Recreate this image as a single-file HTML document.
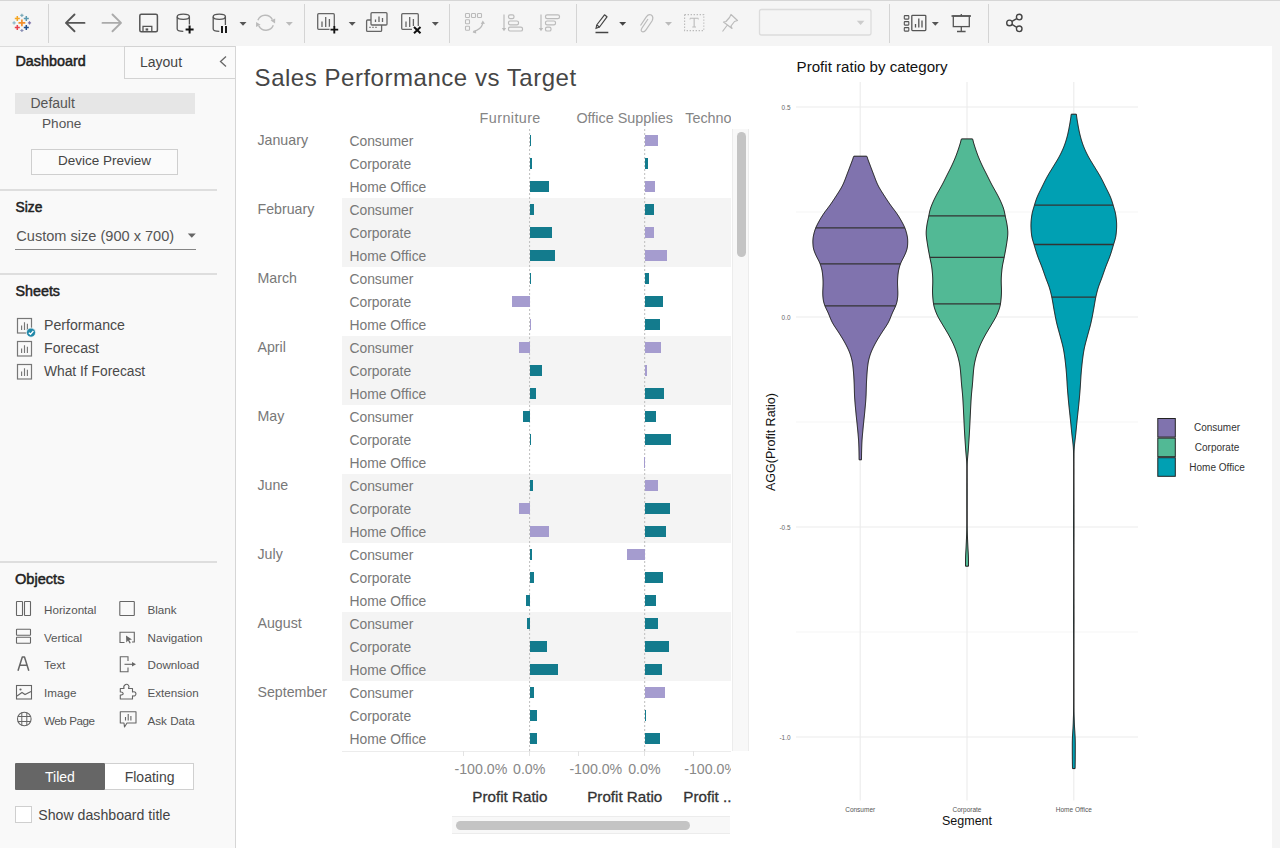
<!DOCTYPE html><html><head><meta charset="utf-8"><style>
html,body{margin:0;padding:0;}
body{width:1280px;height:848px;overflow:hidden;position:relative;background:#f5f5f5;font-family:"Liberation Sans", sans-serif;}
.t{position:absolute;white-space:nowrap;line-height:1;}
svg{position:absolute;overflow:visible;}
</style></head><body>

<div style="position:absolute;left:0px;top:0px;width:1280px;height:1px;background:#d6d6d6"></div>
<div style="position:absolute;left:48px;top:4px;width:1px;height:39px;background:#d4d4d4"></div>
<div style="position:absolute;left:304px;top:4px;width:1px;height:39px;background:#d4d4d4"></div>
<div style="position:absolute;left:449px;top:4px;width:1px;height:39px;background:#d4d4d4"></div>
<div style="position:absolute;left:576px;top:4px;width:1px;height:39px;background:#d4d4d4"></div>
<div style="position:absolute;left:889px;top:4px;width:1px;height:39px;background:#d4d4d4"></div>
<div style="position:absolute;left:988px;top:4px;width:1px;height:39px;background:#d4d4d4"></div>
<svg style="left:0;top:0" width="1280" height="48">
<path d="M18.5 22.9 H25.299999999999997 M21.9 19.5 V26.299999999999997" stroke="#f28e2c" stroke-width="1.7" fill="none"/>
<path d="M14.8 18.5 H19.8 M17.3 16.0 V21.0" stroke="#f5a623" stroke-width="1.5" fill="none"/>
<path d="M23.8 18.5 H28.8 M26.3 16.0 V21.0" stroke="#5b9ab0" stroke-width="1.5" fill="none"/>
<path d="M14.8 27.5 H19.8 M17.3 25.0 V30.0" stroke="#e8414f" stroke-width="1.5" fill="none"/>
<path d="M23.8 27.5 H28.8 M26.3 25.0 V30.0" stroke="#1f4e8c" stroke-width="1.5" fill="none"/>
<path d="M20.299999999999997 15.3 H23.5 M21.9 13.700000000000001 V16.900000000000002" stroke="#7aa9b8" stroke-width="1.2" fill="none"/>
<path d="M12.5 22.9 H15.7 M14.1 21.299999999999997 V24.5" stroke="#8ab5c8" stroke-width="1.2" fill="none"/>
<path d="M27.9 22.9 H31.1 M29.5 21.299999999999997 V24.5" stroke="#7c6fa8" stroke-width="1.2" fill="none"/>
<path d="M20.299999999999997 30.5 H23.5 M21.9 28.9 V32.1" stroke="#8a8fb5" stroke-width="1.2" fill="none"/>
<path d="M84.5 22.9 H66 M74.5 14.5 L66 22.9 L74.5 31.3" stroke="#555" stroke-width="1.9" fill="none" stroke-linecap="round" stroke-linejoin="round"/>
<path d="M102.5 22.9 H120.5 M112.5 14.5 L121 22.9 L112.5 31.3" stroke="#aaa" stroke-width="1.9" fill="none" stroke-linecap="round" stroke-linejoin="round"/>
<rect x="139.8" y="14.3" width="17.6" height="17.4" rx="1.5" stroke="#555" stroke-width="1.5" fill="none"/>
<path d="M143 31.5 V26.3 H151.8 V31.5" stroke="#555" stroke-width="1.3" fill="none"/><rect x="145.6" y="28.4" width="2.6" height="2.2" fill="#555"/>
<ellipse cx="183.3" cy="16.8" rx="6.1" ry="2.6" stroke="#555" stroke-width="1.3" fill="none"/><path d="M177.2 16.8 V29 Q177.2 31.3 183.3 31.3 M189.4 16.8 V25" stroke="#555" stroke-width="1.3" fill="none"/>
<rect x="184.5" y="24.5" width="10" height="10" fill="#f5f5f5"/><path d="M185.6 29.6 H193.6 M189.6 25.6 V33.6" stroke="#111" stroke-width="2" fill="none"/>
<ellipse cx="219.3" cy="16.8" rx="6.1" ry="2.6" stroke="#555" stroke-width="1.3" fill="none"/><path d="M213.2 16.8 V29 Q213.2 31.3 219.3 31.3 M225.4 16.8 V25" stroke="#555" stroke-width="1.3" fill="none"/>
<path d="M222 26 V33 M226 26 V33" stroke="#111" stroke-width="1.9" fill="none"/>
<path d="M239.5 22 L246.5 22 L243.0 25.8 Z" fill="#555"/>
<path d="M257.9 20.3 A8 8 0 0 1 272.4 19.6 M273.3 25.2 A8 8 0 0 1 258.8 25.8" stroke="#bbb" stroke-width="1.5" fill="none"/><path d="M270.6 20.4 L275.2 18.4 L275.1 23.4 Z M260.6 24.8 L256 26.9 L256.1 21.9 Z" fill="#bbb"/>
<path d="M285.8 22 L292.8 22 L289.3 25.8 Z" fill="#bbb"/>
<rect x="317.7" y="13.7" width="16.6" height="15.6" rx="1" stroke="#666" stroke-width="1.3" fill="none"/><path d="M322 27 V21.5 M325.7 27 V17 M329.4 27 V19" stroke="#666" stroke-width="1.3" fill="none"/>
<rect x="329.5" y="26.5" width="9" height="8" fill="#f5f5f5"/>
<path d="M330.5 29.6 H338.2 M334.3 26 V33.6" stroke="#111" stroke-width="1.9" fill="none"/>
<path d="M348.7 22 L355.7 22 L352.2 25.8 Z" fill="#555"/>
<rect x="366.6" y="20" width="15" height="11.4" rx="1" stroke="#666" stroke-width="1.3" fill="none"/>
<rect x="371" y="12.7" width="16" height="12.3" rx="1" stroke="#666" stroke-width="1.3" fill="#f5f5f5"/>
<path d="M375.5 22 V19.5 M379 22 V16.5 M382.5 22 V18" stroke="#666" stroke-width="1.3"/>
<path d="M370 28 V26.8 M373 28 V26.8 M376 28 V26.8" stroke="#666" stroke-width="1.3"/>
<rect x="401.7" y="13.7" width="16.6" height="15.6" rx="1" stroke="#666" stroke-width="1.3" fill="none"/><path d="M406 27 V21.5 M409.7 27 V17 M413.4 27 V19" stroke="#666" stroke-width="1.3" fill="none"/>
<rect x="412" y="26" width="10" height="9" fill="#f5f5f5"/>
<path d="M414 27 L420.5 33.3 M420.5 27 L414 33.3" stroke="#111" stroke-width="2" fill="none"/>
<path d="M431.8 22 L438.8 22 L435.3 25.8 Z" fill="#555"/>
<rect x="465.5" y="13.5" width="4" height="4" rx="0.8" stroke="#bbb" stroke-width="1.1" fill="none"/>
<rect x="471.5" y="13.5" width="4" height="4" rx="0.8" stroke="#bbb" stroke-width="1.1" fill="none"/>
<rect x="477.5" y="13.5" width="4" height="4" rx="0.8" stroke="#bbb" stroke-width="1.1" fill="none"/>
<rect x="465.5" y="19.8" width="4" height="4" rx="0.8" stroke="#bbb" stroke-width="1.1" fill="none"/>
<rect x="465.5" y="26.3" width="4" height="4" rx="0.8" stroke="#bbb" stroke-width="1.1" fill="none"/>
<path d="M473 31.5 Q481 30 483 23" stroke="#bbb" stroke-width="1.2" fill="none"/><path d="M485 23.8 L482.8 20.5 L480.8 24 Z M472.5 32.5 L476 30 L476.2 33.6 Z" fill="#bbb"/>
<path d="M504 14.5 V29.5" stroke="#bbb" stroke-width="1.2"/><path d="M501.8 28 L506.2 28 L504 31.2 Z" fill="#bbb"/>
<rect x="508.5" y="14.8" width="5.5" height="3.8" rx="1.6" stroke="#bbb" stroke-width="1.2" fill="none"/>
<rect x="508.5" y="21" width="10" height="3.8" rx="1.6" stroke="#bbb" stroke-width="1.2" fill="none"/>
<rect x="508.5" y="27.2" width="14" height="3.8" rx="1.6" stroke="#bbb" stroke-width="1.2" fill="none"/>
<path d="M541 14.5 V29.5" stroke="#bbb" stroke-width="1.2"/><path d="M538.8 28 L543.2 28 L541 31.2 Z" fill="#bbb"/>
<rect x="545.5" y="14.8" width="14" height="3.8" rx="1.6" stroke="#bbb" stroke-width="1.2" fill="none"/>
<rect x="545.5" y="21" width="10" height="3.8" rx="1.6" stroke="#bbb" stroke-width="1.2" fill="none"/>
<rect x="545.5" y="27.2" width="5.5" height="3.8" rx="1.6" stroke="#bbb" stroke-width="1.2" fill="none"/>
<path d="M604.5 14.8 L607 16.8 L599.5 27 L596.7 25 Z" stroke="#444" stroke-width="1.2" fill="none" stroke-linejoin="round"/>
<path d="M596.7 25 L596 28.3 L599.5 27" stroke="#444" stroke-width="1.1" fill="none"/>
<path d="M595.5 32.5 H608.3" stroke="#444" stroke-width="1.5"/>
<path d="M619.2 22 L626.2 22 L622.7 25.8 Z" fill="#444"/>
<path d="M648 19 L642 28 Q640 31.5 642.8 31.8 Q644.5 32 646 29.8 L652 21 Q654 17 651.3 15 Q648.5 13.8 646.3 16.8 L640.5 25.5" stroke="#bbb" stroke-width="1.2" fill="none"/>
<path d="M665 22 L672 22 L668.5 25.8 Z" fill="#bbb"/>
<rect x="684.6" y="14.6" width="19.2" height="16" stroke="#bbb" stroke-width="1.1" stroke-dasharray="1.4 1.6" fill="none"/>
<path d="M690 18.3 H698.3 M694.15 18.3 V27 M692.3 27 H696" stroke="#bbb" stroke-width="1.1" fill="none"/><path d="M690 18.3 V19.6 M698.3 18.3 V19.6" stroke="#bbb" stroke-width="0.8"/>
<path d="M731 14.5 L737.5 20.5 L734.5 21.5 L731 26 L732 28.5 L723.5 22 L726 21.5 L729.5 17.5 Z M727 25.5 L722.5 31.5" stroke="#bbb" stroke-width="1.2" fill="none" stroke-linejoin="round"/>
<rect x="759.5" y="9.5" width="111.5" height="25.5" rx="2" stroke="#dcdcdc" stroke-width="1.3" fill="#f5f5f5"/>
<path d="M856.8 20.8 L864.4 20.8 L860.6 25 Z" fill="#ccc"/>
<rect x="904.3" y="15.6" width="4.5" height="3.5" rx="0.6" stroke="#555" stroke-width="1.1" fill="none"/>
<rect x="904.3" y="21.6" width="4.5" height="3.5" rx="0.6" stroke="#555" stroke-width="1.1" fill="none"/>
<rect x="904.3" y="27.6" width="4.5" height="3.5" rx="0.6" stroke="#555" stroke-width="1.1" fill="none"/>
<rect x="911.8" y="15.3" width="14" height="15.3" rx="0.8" stroke="#555" stroke-width="1.3" fill="none"/>
<path d="M915.5 27.5 V24 M918.8 27.5 V18.5 M922 27.5 V20.5" stroke="#555" stroke-width="1.3"/>
<path d="M931.8 22 L938.8 22 L935.3 25.8 Z" fill="#555"/>
<path d="M951.5 16 H971" stroke="#555" stroke-width="1.6"/><rect x="953.3" y="16" width="16" height="10.6" stroke="#555" stroke-width="1.3" fill="none"/>
<path d="M961.3 14 V16 M961.3 26.6 V31.5 M957 31.5 H965.6" stroke="#555" stroke-width="1.3"/>
<circle cx="1019.2" cy="17.1" r="2.8" stroke="#444" stroke-width="1.4" fill="none"/><circle cx="1009.5" cy="22.9" r="2.8" stroke="#444" stroke-width="1.4" fill="none"/><circle cx="1019.2" cy="28.8" r="2.8" stroke="#444" stroke-width="1.4" fill="none"/>
<path d="M1012 21.4 L1016.7 18.6 M1012 24.4 L1016.7 27.3" stroke="#444" stroke-width="1.4"/>
</svg>
<div style="position:absolute;left:0px;top:46px;width:236px;height:802px;background:#f9f9f9"></div>
<div style="position:absolute;left:235px;top:46px;width:1px;height:802px;background:#d9d9d9"></div>
<div style="position:absolute;left:0px;top:46px;width:236px;height:1px;background:#dcdcdc"></div>
<div style="position:absolute;left:124px;top:46px;width:112px;height:33px;box-sizing:border-box;border:1px solid #d3d3d3;border-right:none;background:#fafafa"></div>
<div style="position:absolute;left:235px;top:46px;width:1px;height:802px;background:#d6d6d6"></div>
<div class="t" style="left:15.50px;top:54.35px;font-size:14.35px;color:#222;font-weight:normal;-webkit-text-stroke:0.5px #222;">Dashboard</div>
<div class="t" style="left:140.00px;top:54.95px;font-size:14px;color:#444;font-weight:normal;">Layout</div>
<svg style="left:0;top:0" width="1280" height="848"><path d="M226 56.5 L220.5 61.5 L226 66.5" fill="none" stroke="#666" stroke-width="1.3"/></svg>
<div style="position:absolute;left:15px;top:93px;width:180px;height:21px;background:#e6e6e6"></div>
<div class="t" style="left:30.50px;top:96.45px;font-size:14px;color:#555;font-weight:normal;">Default</div>
<div class="t" style="left:42.00px;top:117.49px;font-size:13.6px;color:#555;font-weight:normal;">Phone</div>
<div style="position:absolute;left:31px;top:149px;width:147px;height:26px;box-sizing:border-box;border:1px solid #cfcfcf;background:#fbfbfb"></div>
<div class="t" style="left:58.00px;top:154.07px;font-size:13.5px;color:#444;font-weight:normal;">Device Preview</div>
<div style="position:absolute;left:0px;top:189px;width:217px;height:1.5px;background:#dedede"></div>
<div class="t" style="left:15.50px;top:200.72px;font-size:13.8px;color:#222;font-weight:normal;-webkit-text-stroke:0.5px #222;">Size</div>
<div class="t" style="left:16.30px;top:229.17px;font-size:14.57px;color:#555;font-weight:normal;">Custom size (900 x 700)</div>
<svg style="left:0;top:0" width="1280" height="848"><path d="M187.8 233.6 L195.8 233.6 L191.8 237.8 Z" fill="#666"/></svg>
<div style="position:absolute;left:15px;top:248.5px;width:181px;height:1.5px;background:#858585"></div>
<div style="position:absolute;left:0px;top:273px;width:217px;height:1.5px;background:#dedede"></div>
<div class="t" style="left:15.50px;top:284.20px;font-size:14.3px;color:#222;font-weight:normal;-webkit-text-stroke:0.5px #222;">Sheets</div>
<svg style="left:0;top:0" width="236" height="848">
<rect x="17.5" y="318.5" width="14" height="14.5" stroke="#777" stroke-width="1.2" fill="none"/>
<path d="M21.6 330 V325.5 M24.5 330 V322.2 M27.4 330 V323.8" stroke="#777" stroke-width="1.15"/>
<rect x="17.5" y="341.5" width="14" height="14.5" stroke="#777" stroke-width="1.2" fill="none"/>
<path d="M21.6 353 V348.5 M24.5 353 V345.2 M27.4 353 V346.8" stroke="#777" stroke-width="1.15"/>
<rect x="17.5" y="364.5" width="14" height="14.5" stroke="#777" stroke-width="1.2" fill="none"/>
<path d="M21.6 376 V371.5 M24.5 376 V368.2 M27.4 376 V369.8" stroke="#777" stroke-width="1.15"/>
<circle cx="31" cy="332.6" r="4.6" fill="#1f87a8" stroke="#f9f9f9" stroke-width="0.8"/><path d="M28.8 332.7 L30.5 334.3 L33.4 331" stroke="#fff" stroke-width="1.3" fill="none"/>
<rect x="16.5" y="601.5" width="6" height="14" rx="0.5" stroke="#666" stroke-width="1.1" fill="none"/><rect x="24.5" y="601.5" width="6" height="14" rx="0.5" stroke="#666" stroke-width="1.1" fill="none"/>
<rect x="16.5" y="629.3" width="14" height="6" rx="0.5" stroke="#666" stroke-width="1.1" fill="none"/><rect x="16.5" y="637.3" width="14" height="6" rx="0.5" stroke="#666" stroke-width="1.1" fill="none"/>
<path d="M18 670.8 L22.3 657 H24.5 L28.8 670.8 M19.8 665.2 H27" stroke="#666" stroke-width="1.5" fill="none" stroke-linejoin="round"/>
<rect x="16.5" y="685.5" width="15" height="13.5" stroke="#666" stroke-width="1.1" fill="none"/><path d="M17 696 L22 692.5 L25 694.5 L31 691.5" stroke="#666" stroke-width="1.1" fill="none"/><circle cx="20.5" cy="689.5" r="1.1" fill="#666"/>
<circle cx="24.3" cy="719" r="6.8" stroke="#666" stroke-width="1.1" fill="none"/><path d="M21.8 712.5 V725.5 M26.8 712.5 V725.5 M17.8 716.5 H30.8 M17.8 721.5 H30.8" stroke="#666" stroke-width="1" fill="none"/>
<rect x="119.8" y="601.5" width="14.5" height="14" rx="0.5" stroke="#666" stroke-width="1.1" fill="none"/>
<path d="M124.5 642.5 H120 V632.3 H134.3 V642 H132" stroke="#666" stroke-width="1.1" fill="none"/><path d="M126 635.5 L132 639.5 L129.2 640 L130.8 643 L129.6 643.6 L128 640.6 L126.3 642.5 Z" fill="#666"/>
<path d="M128 661 V656.8 H120.3 V671.8 H128 V667.5" stroke="#666" stroke-width="1.1" fill="none"/><path d="M124.5 664.3 H133" stroke="#666" stroke-width="1.1"/><path d="M132 662 L136 664.3 L132 666.6 Z" fill="#666"/>
<path d="M120.3 688.5 H124 Q123 686 125.5 684.5 Q128 683.5 129 686.5 L128.5 688.5 H132.5 V692 Q135.5 691 136 693.8 Q135.5 696.5 132.5 695.8 V699 H120.3 V695 Q123.2 695 123.2 693.5 Q123 691.8 120.3 692 Z" stroke="#666" stroke-width="1.1" fill="none" stroke-linejoin="round"/>
<path d="M120.3 711.8 H136 V723 H127 L124.5 727 L124 723 H120.3 Z" stroke="#666" stroke-width="1.1" fill="none" stroke-linejoin="round"/><path d="M125.5 720.5 V717 M128.2 720.5 V714 M130.9 720.5 V716" stroke="#666" stroke-width="1.1"/>
</svg>
<div class="t" style="left:44.00px;top:318.42px;font-size:14.15px;color:#4a4a4a;font-weight:normal;">Performance</div>
<div class="t" style="left:44.00px;top:341.42px;font-size:14.15px;color:#4a4a4a;font-weight:normal;">Forecast</div>
<div class="t" style="left:44.00px;top:364.72px;font-size:13.8px;color:#4a4a4a;font-weight:normal;">What If Forecast</div>
<div style="position:absolute;left:0px;top:561px;width:217px;height:1.5px;background:#dedede"></div>
<div class="t" style="left:15.00px;top:571.94px;font-size:14.6px;color:#222;font-weight:normal;-webkit-text-stroke:0.5px #222;">Objects</div>
<div class="t" style="left:44.00px;top:603.94px;font-size:11.65px;color:#555;font-weight:normal;">Horizontal</div>
<div class="t" style="left:147.50px;top:603.94px;font-size:11.65px;color:#555;font-weight:normal;">Blank</div>
<div class="t" style="left:44.00px;top:631.64px;font-size:11.65px;color:#555;font-weight:normal;">Vertical</div>
<div class="t" style="left:147.50px;top:631.64px;font-size:11.65px;color:#555;font-weight:normal;">Navigation</div>
<div class="t" style="left:44.00px;top:659.34px;font-size:11.65px;color:#555;font-weight:normal;">Text</div>
<div class="t" style="left:147.50px;top:659.34px;font-size:11.65px;color:#555;font-weight:normal;">Download</div>
<div class="t" style="left:44.00px;top:687.04px;font-size:11.65px;color:#555;font-weight:normal;">Image</div>
<div class="t" style="left:147.50px;top:687.04px;font-size:11.65px;color:#555;font-weight:normal;">Extension</div>
<div class="t" style="left:44.00px;top:714.74px;font-size:11.65px;color:#555;font-weight:normal;letter-spacing:-0.45px;">Web Page</div>
<div class="t" style="left:147.50px;top:714.74px;font-size:11.65px;color:#555;font-weight:normal;">Ask Data</div>
<div style="position:absolute;left:15px;top:763px;width:90px;height:27px;background:#666;border-radius:1px"></div>
<div style="position:absolute;left:105px;top:763px;width:89px;height:27px;box-sizing:border-box;border:1px solid #d0d0d0;border-left:none;background:#fff"></div>
<div class="t" style="left:45.00px;top:770.15px;font-size:14px;color:#fff;font-weight:normal;">Tiled</div>
<div class="t" style="left:124.70px;top:770.15px;font-size:14px;color:#444;font-weight:normal;">Floating</div>
<div style="position:absolute;left:15px;top:806px;width:17px;height:17px;box-sizing:border-box;border:1px solid #cfcfcf;background:#fff"></div>
<div class="t" style="left:38.30px;top:808.32px;font-size:14.15px;color:#444;font-weight:normal;">Show dashboard title</div>
<div style="position:absolute;left:236px;top:46px;width:1036px;height:802px;background:#fff"></div>
<div class="t" style="left:254.60px;top:66.28px;font-size:24px;color:#464646;font-weight:normal;letter-spacing:0.53px;">Sales Performance vs Target</div>
<div style="position:absolute;left:236px;top:100px;width:495px;height:30px;overflow:hidden">
<div class="t" style="left:243.60px;top:10.81px;font-size:14.4px;color:#858585;font-weight:normal;letter-spacing:0.4px;">Furniture</div>
<div class="t" style="left:340.40px;top:10.81px;font-size:14.4px;color:#858585;font-weight:normal;">Office Supplies</div>
<div class="t" style="left:449.20px;top:10.81px;font-size:14.4px;color:#858585;font-weight:normal;">Techno</div>
</div>
<div style="position:absolute;left:342px;top:198px;width:389px;height:69px;background:#f4f4f4"></div>
<div style="position:absolute;left:342px;top:336px;width:389px;height:69px;background:#f4f4f4"></div>
<div style="position:absolute;left:342px;top:474px;width:389px;height:69px;background:#f4f4f4"></div>
<div style="position:absolute;left:342px;top:612px;width:389px;height:69px;background:#f4f4f4"></div>
<svg style="left:0;top:0" width="1280" height="848"><path d="M529.6 129 V751 M644.7 129 V751" stroke="#bdbdbd" stroke-width="1" stroke-dasharray="2 2"/></svg>
<div style="position:absolute;left:529.60px;top:135px;width:1.40px;height:11px;background:#137b8d"></div>
<div style="position:absolute;left:644.70px;top:135px;width:13.60px;height:11px;background:#a59ccf"></div>
<div style="position:absolute;left:529.60px;top:158px;width:2.00px;height:11px;background:#137b8d"></div>
<div style="position:absolute;left:644.70px;top:158px;width:3.30px;height:11px;background:#137b8d"></div>
<div style="position:absolute;left:529.60px;top:181px;width:19.30px;height:11px;background:#137b8d"></div>
<div style="position:absolute;left:644.70px;top:181px;width:10.30px;height:11px;background:#a59ccf"></div>
<div style="position:absolute;left:529.60px;top:204px;width:4.40px;height:11px;background:#137b8d"></div>
<div style="position:absolute;left:644.70px;top:204px;width:8.90px;height:11px;background:#137b8d"></div>
<div style="position:absolute;left:529.60px;top:227px;width:22.80px;height:11px;background:#137b8d"></div>
<div style="position:absolute;left:644.70px;top:227px;width:8.90px;height:11px;background:#a59ccf"></div>
<div style="position:absolute;left:529.60px;top:250px;width:25.30px;height:11px;background:#137b8d"></div>
<div style="position:absolute;left:644.70px;top:250px;width:22.80px;height:11px;background:#a59ccf"></div>
<div style="position:absolute;left:529.60px;top:273px;width:1.40px;height:11px;background:#137b8d"></div>
<div style="position:absolute;left:644.70px;top:273px;width:4.50px;height:11px;background:#137b8d"></div>
<div style="position:absolute;left:512.30px;top:296px;width:17.30px;height:11px;background:#a59ccf"></div>
<div style="position:absolute;left:644.70px;top:296px;width:18.30px;height:11px;background:#137b8d"></div>
<div style="position:absolute;left:529.60px;top:319px;width:1.20px;height:11px;background:#a59ccf"></div>
<div style="position:absolute;left:644.70px;top:319px;width:15.80px;height:11px;background:#137b8d"></div>
<div style="position:absolute;left:519.20px;top:342px;width:10.40px;height:11px;background:#a59ccf"></div>
<div style="position:absolute;left:644.70px;top:342px;width:16.10px;height:11px;background:#a59ccf"></div>
<div style="position:absolute;left:529.60px;top:365px;width:12.40px;height:11px;background:#137b8d"></div>
<div style="position:absolute;left:644.70px;top:365px;width:2.00px;height:11px;background:#a59ccf"></div>
<div style="position:absolute;left:529.60px;top:388px;width:6.70px;height:11px;background:#137b8d"></div>
<div style="position:absolute;left:644.70px;top:388px;width:19.30px;height:11px;background:#137b8d"></div>
<div style="position:absolute;left:522.90px;top:411px;width:6.70px;height:11px;background:#137b8d"></div>
<div style="position:absolute;left:644.70px;top:411px;width:11.10px;height:11px;background:#137b8d"></div>
<div style="position:absolute;left:529.60px;top:434px;width:1.40px;height:11px;background:#137b8d"></div>
<div style="position:absolute;left:644.70px;top:434px;width:26.30px;height:11px;background:#137b8d"></div>
<div style="position:absolute;left:643.60px;top:457px;width:1.20px;height:11px;background:#a59ccf"></div>
<div style="position:absolute;left:529.60px;top:480px;width:3.20px;height:11px;background:#137b8d"></div>
<div style="position:absolute;left:644.70px;top:480px;width:13.60px;height:11px;background:#a59ccf"></div>
<div style="position:absolute;left:519.20px;top:503px;width:10.40px;height:11px;background:#a59ccf"></div>
<div style="position:absolute;left:644.70px;top:503px;width:25.00px;height:11px;background:#137b8d"></div>
<div style="position:absolute;left:529.60px;top:526px;width:19.30px;height:11px;background:#a59ccf"></div>
<div style="position:absolute;left:644.70px;top:526px;width:21.50px;height:11px;background:#137b8d"></div>
<div style="position:absolute;left:529.60px;top:549px;width:2.00px;height:11px;background:#137b8d"></div>
<div style="position:absolute;left:627.40px;top:549px;width:17.30px;height:11px;background:#a59ccf"></div>
<div style="position:absolute;left:529.60px;top:572px;width:4.40px;height:11px;background:#137b8d"></div>
<div style="position:absolute;left:644.70px;top:572px;width:18.30px;height:11px;background:#137b8d"></div>
<div style="position:absolute;left:526.10px;top:595px;width:3.50px;height:11px;background:#137b8d"></div>
<div style="position:absolute;left:644.70px;top:595px;width:11.10px;height:11px;background:#137b8d"></div>
<div style="position:absolute;left:527.40px;top:618px;width:2.20px;height:11px;background:#137b8d"></div>
<div style="position:absolute;left:644.70px;top:618px;width:13.60px;height:11px;background:#137b8d"></div>
<div style="position:absolute;left:529.60px;top:641px;width:17.10px;height:11px;background:#137b8d"></div>
<div style="position:absolute;left:644.70px;top:641px;width:24.00px;height:11px;background:#137b8d"></div>
<div style="position:absolute;left:529.60px;top:664px;width:28.40px;height:11px;background:#137b8d"></div>
<div style="position:absolute;left:644.70px;top:664px;width:17.10px;height:11px;background:#137b8d"></div>
<div style="position:absolute;left:529.60px;top:687px;width:4.40px;height:11px;background:#137b8d"></div>
<div style="position:absolute;left:644.70px;top:687px;width:20.50px;height:11px;background:#a59ccf"></div>
<div style="position:absolute;left:529.60px;top:710px;width:7.70px;height:11px;background:#137b8d"></div>
<div style="position:absolute;left:644.70px;top:710px;width:1.30px;height:11px;background:#137b8d"></div>
<div style="position:absolute;left:529.60px;top:733px;width:7.70px;height:11px;background:#137b8d"></div>
<div style="position:absolute;left:644.70px;top:733px;width:15.80px;height:11px;background:#137b8d"></div>
<div class="t" style="left:257.50px;top:132.88px;font-size:14.2px;color:#787878;font-weight:normal;">January</div>
<div class="t" style="left:349.40px;top:134.93px;font-size:13.9px;color:#787878;font-weight:normal;">Consumer</div>
<div class="t" style="left:349.40px;top:157.93px;font-size:13.9px;color:#787878;font-weight:normal;">Corporate</div>
<div class="t" style="left:349.40px;top:180.93px;font-size:13.9px;color:#787878;font-weight:normal;">Home Office</div>
<div class="t" style="left:257.50px;top:201.88px;font-size:14.2px;color:#787878;font-weight:normal;">February</div>
<div class="t" style="left:349.40px;top:203.93px;font-size:13.9px;color:#787878;font-weight:normal;">Consumer</div>
<div class="t" style="left:349.40px;top:226.93px;font-size:13.9px;color:#787878;font-weight:normal;">Corporate</div>
<div class="t" style="left:349.40px;top:249.93px;font-size:13.9px;color:#787878;font-weight:normal;">Home Office</div>
<div class="t" style="left:257.50px;top:270.88px;font-size:14.2px;color:#787878;font-weight:normal;">March</div>
<div class="t" style="left:349.40px;top:272.93px;font-size:13.9px;color:#787878;font-weight:normal;">Consumer</div>
<div class="t" style="left:349.40px;top:295.93px;font-size:13.9px;color:#787878;font-weight:normal;">Corporate</div>
<div class="t" style="left:349.40px;top:318.93px;font-size:13.9px;color:#787878;font-weight:normal;">Home Office</div>
<div class="t" style="left:257.50px;top:339.88px;font-size:14.2px;color:#787878;font-weight:normal;">April</div>
<div class="t" style="left:349.40px;top:341.93px;font-size:13.9px;color:#787878;font-weight:normal;">Consumer</div>
<div class="t" style="left:349.40px;top:364.93px;font-size:13.9px;color:#787878;font-weight:normal;">Corporate</div>
<div class="t" style="left:349.40px;top:387.93px;font-size:13.9px;color:#787878;font-weight:normal;">Home Office</div>
<div class="t" style="left:257.50px;top:408.88px;font-size:14.2px;color:#787878;font-weight:normal;">May</div>
<div class="t" style="left:349.40px;top:410.93px;font-size:13.9px;color:#787878;font-weight:normal;">Consumer</div>
<div class="t" style="left:349.40px;top:433.93px;font-size:13.9px;color:#787878;font-weight:normal;">Corporate</div>
<div class="t" style="left:349.40px;top:456.93px;font-size:13.9px;color:#787878;font-weight:normal;">Home Office</div>
<div class="t" style="left:257.50px;top:477.88px;font-size:14.2px;color:#787878;font-weight:normal;">June</div>
<div class="t" style="left:349.40px;top:479.93px;font-size:13.9px;color:#787878;font-weight:normal;">Consumer</div>
<div class="t" style="left:349.40px;top:502.93px;font-size:13.9px;color:#787878;font-weight:normal;">Corporate</div>
<div class="t" style="left:349.40px;top:525.93px;font-size:13.9px;color:#787878;font-weight:normal;">Home Office</div>
<div class="t" style="left:257.50px;top:546.88px;font-size:14.2px;color:#787878;font-weight:normal;">July</div>
<div class="t" style="left:349.40px;top:548.93px;font-size:13.9px;color:#787878;font-weight:normal;">Consumer</div>
<div class="t" style="left:349.40px;top:571.93px;font-size:13.9px;color:#787878;font-weight:normal;">Corporate</div>
<div class="t" style="left:349.40px;top:594.93px;font-size:13.9px;color:#787878;font-weight:normal;">Home Office</div>
<div class="t" style="left:257.50px;top:615.88px;font-size:14.2px;color:#787878;font-weight:normal;">August</div>
<div class="t" style="left:349.40px;top:617.93px;font-size:13.9px;color:#787878;font-weight:normal;">Consumer</div>
<div class="t" style="left:349.40px;top:640.93px;font-size:13.9px;color:#787878;font-weight:normal;">Corporate</div>
<div class="t" style="left:349.40px;top:663.93px;font-size:13.9px;color:#787878;font-weight:normal;">Home Office</div>
<div class="t" style="left:257.50px;top:684.88px;font-size:14.2px;color:#787878;font-weight:normal;">September</div>
<div class="t" style="left:349.40px;top:686.93px;font-size:13.9px;color:#787878;font-weight:normal;">Consumer</div>
<div class="t" style="left:349.40px;top:709.93px;font-size:13.9px;color:#787878;font-weight:normal;">Corporate</div>
<div class="t" style="left:349.40px;top:732.93px;font-size:13.9px;color:#787878;font-weight:normal;">Home Office</div>
<div style="position:absolute;left:342px;top:751px;width:389px;height:1px;background:#ececec"></div>
<div style="position:absolute;left:463px;top:751px;width:1px;height:5px;background:#e3e3e3"></div>
<div style="position:absolute;left:529px;top:751px;width:1px;height:5px;background:#e3e3e3"></div>
<div style="position:absolute;left:578px;top:751px;width:1px;height:5px;background:#e3e3e3"></div>
<div style="position:absolute;left:644px;top:751px;width:1px;height:5px;background:#e3e3e3"></div>
<div style="position:absolute;left:693px;top:751px;width:1px;height:5px;background:#e3e3e3"></div>
<div style="position:absolute;left:440px;top:755px;width:291px;height:60px;overflow:hidden">
<div class="t" style="left:14.50px;top:6.98px;font-size:14.2px;color:#888;font-weight:normal;">-100.0%</div>
<div class="t" style="left:73.00px;top:6.98px;font-size:14.2px;color:#888;font-weight:normal;">0.0%</div>
<div class="t" style="left:129.40px;top:6.98px;font-size:14.2px;color:#888;font-weight:normal;">-100.0%</div>
<div class="t" style="left:188.20px;top:6.98px;font-size:14.2px;color:#888;font-weight:normal;">0.0%</div>
<div class="t" style="left:244.20px;top:6.98px;font-size:14.2px;color:#888;font-weight:normal;">-100.0%</div>
<div class="t" style="left:32.30px;top:33.53px;font-size:15.2px;color:#333;font-weight:normal;-webkit-text-stroke:0.3px #333;">Profit Ratio</div>
<div class="t" style="left:147.20px;top:33.53px;font-size:15.2px;color:#333;font-weight:normal;-webkit-text-stroke:0.3px #333;">Profit Ratio</div>
<div class="t" style="left:243.30px;top:33.53px;font-size:15.2px;color:#333;font-weight:normal;-webkit-text-stroke:0.3px #333;">Profit ..</div>
</div>
<div style="position:absolute;left:452px;top:816px;width:278px;height:18px;box-sizing:border-box;background:#f8f8f8;border-top:1px solid #ececec;border-bottom:1px solid #ececec"></div>
<div style="position:absolute;left:456px;top:821px;width:234px;height:9px;background:#c4c4c4;border-radius:5px"></div>
<div style="position:absolute;left:732px;top:129px;width:17px;height:622px;box-sizing:border-box;background:#f8f8f8;border-left:1px solid #ececec;border-right:1px solid #ececec"></div>
<div style="position:absolute;left:737px;top:132px;width:9px;height:125px;background:#c4c4c4;border-radius:5px"></div>
<svg style="left:0;top:0" width="1280" height="848">
<path d="M796 107 H1138" stroke="#ebebeb" stroke-width="1.1"/>
<path d="M796 317 H1138" stroke="#ebebeb" stroke-width="1.1"/>
<path d="M796 527 H1138" stroke="#ebebeb" stroke-width="1.1"/>
<path d="M796 737 H1138" stroke="#ebebeb" stroke-width="1.1"/>
<path d="M796 212 H1138" stroke="#f3f3f3" stroke-width="0.8"/>
<path d="M796 422 H1138" stroke="#f3f3f3" stroke-width="0.8"/>
<path d="M796 632 H1138" stroke="#f3f3f3" stroke-width="0.8"/>
<path d="M860.2 82 V800.5" stroke="#ebebeb" stroke-width="1.1"/>
<path d="M967 82 V800.5" stroke="#ebebeb" stroke-width="1.1"/>
<path d="M1073.8 82 V800.5" stroke="#ebebeb" stroke-width="1.1"/>
<path d="M866.70 156.20 L867.25 157.20 L867.53 158.20 L867.86 159.20 L868.22 160.20 L868.59 161.20 L868.96 162.20 L869.34 163.20 L869.72 164.20 L870.10 165.20 L870.48 166.20 L870.85 167.20 L871.23 168.20 L871.61 169.20 L871.99 170.20 L872.37 171.20 L872.76 172.20 L873.14 173.20 L873.52 174.20 L873.90 175.20 L874.27 176.20 L874.65 177.20 L875.03 178.20 L875.41 179.20 L875.80 180.20 L876.19 181.20 L876.61 182.20 L877.04 183.20 L877.49 184.20 L877.97 185.20 L878.48 186.20 L879.01 187.20 L879.58 188.20 L880.16 189.20 L880.77 190.20 L881.39 191.20 L882.02 192.20 L882.66 193.20 L883.30 194.20 L883.94 195.20 L884.59 196.20 L885.23 197.20 L885.88 198.20 L886.54 199.20 L887.20 200.20 L887.87 201.20 L888.54 202.20 L889.23 203.20 L889.93 204.20 L890.65 205.20 L891.38 206.20 L892.12 207.20 L892.88 208.20 L893.64 209.20 L894.40 210.20 L895.15 211.20 L895.88 212.20 L896.59 213.20 L897.28 214.20 L897.94 215.20 L898.58 216.20 L899.21 217.20 L899.81 218.20 L900.40 219.20 L900.98 220.20 L901.53 221.20 L902.08 222.20 L902.61 223.20 L903.13 224.20 L903.63 225.20 L904.11 226.20 L904.55 227.20 L904.97 228.20 L905.35 229.20 L905.69 230.20 L906.00 231.20 L906.29 232.20 L906.56 233.20 L906.81 234.20 L907.04 235.20 L907.24 236.20 L907.41 237.20 L907.54 238.20 L907.64 239.20 L907.70 240.20 L907.73 241.20 L907.73 242.20 L907.70 243.20 L907.65 244.20 L907.58 245.20 L907.48 246.20 L907.35 247.20 L907.17 248.20 L906.93 249.20 L906.65 250.20 L906.31 251.20 L905.95 252.20 L905.55 253.20 L905.12 254.20 L904.67 255.20 L904.20 256.20 L903.69 257.20 L903.17 258.20 L902.65 259.20 L902.13 260.20 L901.63 261.20 L901.16 262.20 L900.74 263.20 L900.35 264.20 L899.99 265.20 L899.67 266.20 L899.37 267.20 L899.10 268.20 L898.86 269.20 L898.64 270.20 L898.46 271.20 L898.30 272.20 L898.16 273.20 L898.05 274.20 L897.95 275.20 L897.85 276.20 L897.77 277.20 L897.70 278.20 L897.64 279.20 L897.60 280.20 L897.56 281.20 L897.54 282.20 L897.54 283.20 L897.55 284.20 L897.57 285.20 L897.61 286.20 L897.65 287.20 L897.69 288.20 L897.74 289.20 L897.78 290.20 L897.82 291.20 L897.84 292.20 L897.85 293.20 L897.83 294.20 L897.80 295.20 L897.74 296.20 L897.66 297.20 L897.55 298.20 L897.42 299.20 L897.27 300.20 L897.08 301.20 L896.85 302.20 L896.58 303.20 L896.26 304.20 L895.91 305.20 L895.52 306.20 L895.10 307.20 L894.65 308.20 L894.18 309.20 L893.69 310.20 L893.21 311.20 L892.74 312.20 L892.29 313.20 L891.87 314.20 L891.45 315.20 L891.06 316.20 L890.66 317.20 L890.26 318.20 L889.85 319.20 L889.41 320.20 L888.95 321.20 L888.44 322.20 L887.91 323.20 L887.33 324.20 L886.73 325.20 L886.09 326.20 L885.44 327.20 L884.77 328.20 L884.10 329.20 L883.43 330.20 L882.76 331.20 L882.10 332.20 L881.45 333.20 L880.82 334.20 L880.19 335.20 L879.57 336.20 L878.95 337.20 L878.34 338.20 L877.74 339.20 L877.15 340.20 L876.57 341.20 L876.01 342.20 L875.46 343.20 L874.92 344.20 L874.40 345.20 L873.89 346.20 L873.39 347.20 L872.90 348.20 L872.43 349.20 L871.98 350.20 L871.54 351.20 L871.14 352.20 L870.75 353.20 L870.39 354.20 L870.06 355.20 L869.74 356.20 L869.45 357.20 L869.18 358.20 L868.92 359.20 L868.69 360.20 L868.48 361.20 L868.28 362.20 L868.12 363.20 L867.96 364.20 L867.83 365.20 L867.70 366.20 L867.59 367.20 L867.48 368.20 L867.38 369.20 L867.29 370.20 L867.20 371.20 L867.12 372.20 L867.05 373.20 L866.97 374.20 L866.90 375.20 L866.83 376.20 L866.77 377.20 L866.71 378.20 L866.65 379.20 L866.60 380.20 L866.54 381.20 L866.50 382.20 L866.45 383.20 L866.41 384.20 L866.38 385.20 L866.35 386.20 L866.32 387.20 L866.29 388.20 L866.26 389.20 L866.24 390.20 L866.21 391.20 L866.18 392.20 L866.15 393.20 L866.12 394.20 L866.08 395.20 L866.03 396.20 L865.98 397.20 L865.92 398.20 L865.85 399.20 L865.78 400.20 L865.71 401.20 L865.63 402.20 L865.55 403.20 L865.46 404.20 L865.38 405.20 L865.29 406.20 L865.19 407.20 L865.10 408.20 L865.01 409.20 L864.92 410.20 L864.82 411.20 L864.73 412.20 L864.63 413.20 L864.54 414.20 L864.43 415.20 L864.33 416.20 L864.22 417.20 L864.12 418.20 L864.01 419.20 L863.90 420.20 L863.79 421.20 L863.69 422.20 L863.58 423.20 L863.48 424.20 L863.37 425.20 L863.28 426.20 L863.18 427.20 L863.08 428.20 L862.99 429.20 L862.90 430.20 L862.80 431.20 L862.71 432.20 L862.61 433.20 L862.52 434.20 L862.43 435.20 L862.34 436.20 L862.26 437.20 L862.18 438.20 L862.10 439.20 L862.03 440.20 L861.97 441.20 L861.92 442.20 L861.87 443.20 L861.82 444.20 L861.79 445.20 L861.75 446.20 L861.72 447.20 L861.69 448.20 L861.67 449.20 L861.64 450.20 L861.62 451.20 L861.59 452.20 L861.57 453.20 L861.56 454.20 L861.54 455.20 L861.53 456.20 L861.52 457.20 L861.51 458.20 L861.51 459.20 L861.50 459.80 L859.10 459.80 L859.09 459.20 L859.09 458.20 L859.08 457.20 L859.07 456.20 L859.06 455.20 L859.04 454.20 L859.03 453.20 L859.01 452.20 L858.98 451.20 L858.96 450.20 L858.93 449.20 L858.91 448.20 L858.88 447.20 L858.85 446.20 L858.81 445.20 L858.78 444.20 L858.73 443.20 L858.68 442.20 L858.63 441.20 L858.57 440.20 L858.50 439.20 L858.42 438.20 L858.34 437.20 L858.26 436.20 L858.17 435.20 L858.08 434.20 L857.99 433.20 L857.89 432.20 L857.80 431.20 L857.70 430.20 L857.61 429.20 L857.52 428.20 L857.42 427.20 L857.32 426.20 L857.23 425.20 L857.12 424.20 L857.02 423.20 L856.91 422.20 L856.81 421.20 L856.70 420.20 L856.59 419.20 L856.48 418.20 L856.38 417.20 L856.27 416.20 L856.17 415.20 L856.06 414.20 L855.97 413.20 L855.87 412.20 L855.78 411.20 L855.68 410.20 L855.59 409.20 L855.50 408.20 L855.41 407.20 L855.31 406.20 L855.22 405.20 L855.14 404.20 L855.05 403.20 L854.97 402.20 L854.89 401.20 L854.82 400.20 L854.75 399.20 L854.68 398.20 L854.62 397.20 L854.57 396.20 L854.52 395.20 L854.48 394.20 L854.45 393.20 L854.42 392.20 L854.39 391.20 L854.36 390.20 L854.34 389.20 L854.31 388.20 L854.28 387.20 L854.25 386.20 L854.22 385.20 L854.19 384.20 L854.15 383.20 L854.10 382.20 L854.06 381.20 L854.00 380.20 L853.95 379.20 L853.89 378.20 L853.83 377.20 L853.77 376.20 L853.70 375.20 L853.63 374.20 L853.55 373.20 L853.48 372.20 L853.40 371.20 L853.31 370.20 L853.22 369.20 L853.12 368.20 L853.01 367.20 L852.90 366.20 L852.77 365.20 L852.64 364.20 L852.48 363.20 L852.32 362.20 L852.12 361.20 L851.91 360.20 L851.68 359.20 L851.42 358.20 L851.15 357.20 L850.86 356.20 L850.54 355.20 L850.21 354.20 L849.85 353.20 L849.46 352.20 L849.06 351.20 L848.62 350.20 L848.17 349.20 L847.70 348.20 L847.21 347.20 L846.71 346.20 L846.20 345.20 L845.68 344.20 L845.14 343.20 L844.59 342.20 L844.03 341.20 L843.45 340.20 L842.86 339.20 L842.26 338.20 L841.65 337.20 L841.03 336.20 L840.41 335.20 L839.78 334.20 L839.15 333.20 L838.50 332.20 L837.84 331.20 L837.17 330.20 L836.50 329.20 L835.83 328.20 L835.16 327.20 L834.51 326.20 L833.87 325.20 L833.27 324.20 L832.69 323.20 L832.16 322.20 L831.65 321.20 L831.19 320.20 L830.75 319.20 L830.34 318.20 L829.94 317.20 L829.54 316.20 L829.15 315.20 L828.73 314.20 L828.31 313.20 L827.86 312.20 L827.39 311.20 L826.91 310.20 L826.42 309.20 L825.95 308.20 L825.50 307.20 L825.08 306.20 L824.69 305.20 L824.34 304.20 L824.02 303.20 L823.75 302.20 L823.52 301.20 L823.33 300.20 L823.18 299.20 L823.05 298.20 L822.94 297.20 L822.86 296.20 L822.80 295.20 L822.77 294.20 L822.75 293.20 L822.76 292.20 L822.78 291.20 L822.82 290.20 L822.86 289.20 L822.91 288.20 L822.95 287.20 L822.99 286.20 L823.03 285.20 L823.05 284.20 L823.06 283.20 L823.06 282.20 L823.04 281.20 L823.00 280.20 L822.96 279.20 L822.90 278.20 L822.83 277.20 L822.75 276.20 L822.65 275.20 L822.55 274.20 L822.44 273.20 L822.30 272.20 L822.14 271.20 L821.96 270.20 L821.74 269.20 L821.50 268.20 L821.23 267.20 L820.93 266.20 L820.61 265.20 L820.25 264.20 L819.86 263.20 L819.44 262.20 L818.97 261.20 L818.47 260.20 L817.95 259.20 L817.43 258.20 L816.91 257.20 L816.40 256.20 L815.93 255.20 L815.48 254.20 L815.05 253.20 L814.65 252.20 L814.29 251.20 L813.95 250.20 L813.67 249.20 L813.43 248.20 L813.25 247.20 L813.12 246.20 L813.02 245.20 L812.95 244.20 L812.90 243.20 L812.87 242.20 L812.87 241.20 L812.90 240.20 L812.96 239.20 L813.06 238.20 L813.19 237.20 L813.36 236.20 L813.56 235.20 L813.79 234.20 L814.04 233.20 L814.31 232.20 L814.60 231.20 L814.91 230.20 L815.25 229.20 L815.63 228.20 L816.05 227.20 L816.49 226.20 L816.97 225.20 L817.47 224.20 L817.99 223.20 L818.52 222.20 L819.07 221.20 L819.62 220.20 L820.20 219.20 L820.79 218.20 L821.39 217.20 L822.02 216.20 L822.66 215.20 L823.32 214.20 L824.01 213.20 L824.72 212.20 L825.45 211.20 L826.20 210.20 L826.96 209.20 L827.72 208.20 L828.48 207.20 L829.22 206.20 L829.95 205.20 L830.67 204.20 L831.37 203.20 L832.06 202.20 L832.73 201.20 L833.40 200.20 L834.06 199.20 L834.72 198.20 L835.37 197.20 L836.01 196.20 L836.66 195.20 L837.30 194.20 L837.94 193.20 L838.58 192.20 L839.21 191.20 L839.83 190.20 L840.44 189.20 L841.02 188.20 L841.59 187.20 L842.12 186.20 L842.63 185.20 L843.11 184.20 L843.56 183.20 L843.99 182.20 L844.41 181.20 L844.80 180.20 L845.19 179.20 L845.57 178.20 L845.95 177.20 L846.33 176.20 L846.70 175.20 L847.08 174.20 L847.46 173.20 L847.84 172.20 L848.23 171.20 L848.61 170.20 L848.99 169.20 L849.37 168.20 L849.75 167.20 L850.12 166.20 L850.50 165.20 L850.88 164.20 L851.26 163.20 L851.64 162.20 L852.01 161.20 L852.38 160.20 L852.74 159.20 L853.07 158.20 L853.35 157.20 L853.90 156.20 Z" fill="#8073ae" stroke="#1c1c1c" stroke-width="1.0" stroke-linejoin="round"/>
<path d="M815.69 227.8 H904.91" stroke="#333" stroke-width="1.3"/>
<path d="M820.23 263.9 H900.37" stroke="#333" stroke-width="1.3"/>
<path d="M824.89 305.9 H895.71" stroke="#333" stroke-width="1.3"/>
<path d="M972.50 138.90 L972.90 139.90 L973.12 140.90 L973.37 141.90 L973.64 142.90 L973.93 143.90 L974.24 144.90 L974.55 145.90 L974.86 146.90 L975.19 147.90 L975.52 148.90 L975.86 149.90 L976.20 150.90 L976.55 151.90 L976.91 152.90 L977.27 153.90 L977.65 154.90 L978.03 155.90 L978.42 156.90 L978.82 157.90 L979.24 158.90 L979.66 159.90 L980.09 160.90 L980.53 161.90 L980.98 162.90 L981.44 163.90 L981.90 164.90 L982.37 165.90 L982.85 166.90 L983.34 167.90 L983.84 168.90 L984.34 169.90 L984.84 170.90 L985.36 171.90 L985.87 172.90 L986.38 173.90 L986.88 174.90 L987.39 175.90 L987.89 176.90 L988.38 177.90 L988.88 178.90 L989.37 179.90 L989.87 180.90 L990.37 181.90 L990.88 182.90 L991.40 183.90 L991.93 184.90 L992.47 185.90 L993.02 186.90 L993.58 187.90 L994.14 188.90 L994.71 189.90 L995.28 190.90 L995.84 191.90 L996.40 192.90 L996.94 193.90 L997.48 194.90 L998.00 195.90 L998.52 196.90 L999.03 197.90 L999.52 198.90 L1000.01 199.90 L1000.47 200.90 L1000.92 201.90 L1001.36 202.90 L1001.79 203.90 L1002.20 204.90 L1002.59 205.90 L1002.97 206.90 L1003.32 207.90 L1003.64 208.90 L1003.93 209.90 L1004.19 210.90 L1004.43 211.90 L1004.64 212.90 L1004.84 213.90 L1005.03 214.90 L1005.23 215.90 L1005.43 216.90 L1005.64 217.90 L1005.86 218.90 L1006.08 219.90 L1006.30 220.90 L1006.51 221.90 L1006.71 222.90 L1006.89 223.90 L1007.06 224.90 L1007.21 225.90 L1007.35 226.90 L1007.47 227.90 L1007.59 228.90 L1007.68 229.90 L1007.75 230.90 L1007.80 231.90 L1007.81 232.90 L1007.80 233.90 L1007.76 234.90 L1007.68 235.90 L1007.58 236.90 L1007.47 237.90 L1007.34 238.90 L1007.20 239.90 L1007.05 240.90 L1006.90 241.90 L1006.75 242.90 L1006.60 243.90 L1006.45 244.90 L1006.29 245.90 L1006.12 246.90 L1005.95 247.90 L1005.77 248.90 L1005.59 249.90 L1005.41 250.90 L1005.22 251.90 L1005.03 252.90 L1004.84 253.90 L1004.65 254.90 L1004.46 255.90 L1004.26 256.90 L1004.06 257.90 L1003.86 258.90 L1003.65 259.90 L1003.43 260.90 L1003.22 261.90 L1003.01 262.90 L1002.81 263.90 L1002.62 264.90 L1002.44 265.90 L1002.29 266.90 L1002.15 267.90 L1002.03 268.90 L1001.92 269.90 L1001.81 270.90 L1001.72 271.90 L1001.62 272.90 L1001.54 273.90 L1001.46 274.90 L1001.40 275.90 L1001.34 276.90 L1001.29 277.90 L1001.26 278.90 L1001.24 279.90 L1001.23 280.90 L1001.24 281.90 L1001.25 282.90 L1001.28 283.90 L1001.31 284.90 L1001.34 285.90 L1001.38 286.90 L1001.41 287.90 L1001.44 288.90 L1001.46 289.90 L1001.47 290.90 L1001.46 291.90 L1001.45 292.90 L1001.41 293.90 L1001.37 294.90 L1001.31 295.90 L1001.24 296.90 L1001.16 297.90 L1001.07 298.90 L1000.97 299.90 L1000.86 300.90 L1000.74 301.90 L1000.60 302.90 L1000.45 303.90 L1000.27 304.90 L1000.06 305.90 L999.82 306.90 L999.54 307.90 L999.23 308.90 L998.89 309.90 L998.53 310.90 L998.15 311.90 L997.75 312.90 L997.33 313.90 L996.88 314.90 L996.41 315.90 L995.91 316.90 L995.38 317.90 L994.82 318.90 L994.25 319.90 L993.66 320.90 L993.07 321.90 L992.47 322.90 L991.88 323.90 L991.28 324.90 L990.68 325.90 L990.09 326.90 L989.48 327.90 L988.88 328.90 L988.27 329.90 L987.67 330.90 L987.08 331.90 L986.49 332.90 L985.91 333.90 L985.35 334.90 L984.80 335.90 L984.26 336.90 L983.72 337.90 L983.20 338.90 L982.68 339.90 L982.18 340.90 L981.69 341.90 L981.21 342.90 L980.75 343.90 L980.31 344.90 L979.88 345.90 L979.46 346.90 L979.06 347.90 L978.67 348.90 L978.29 349.90 L977.93 350.90 L977.58 351.90 L977.24 352.90 L976.92 353.90 L976.62 354.90 L976.33 355.90 L976.05 356.90 L975.79 357.90 L975.54 358.90 L975.30 359.90 L975.07 360.90 L974.85 361.90 L974.65 362.90 L974.46 363.90 L974.28 364.90 L974.12 365.90 L973.97 366.90 L973.84 367.90 L973.72 368.90 L973.62 369.90 L973.51 370.90 L973.42 371.90 L973.33 372.90 L973.25 373.90 L973.17 374.90 L973.09 375.90 L973.02 376.90 L972.95 377.90 L972.87 378.90 L972.80 379.90 L972.72 380.90 L972.65 381.90 L972.57 382.90 L972.48 383.90 L972.40 384.90 L972.31 385.90 L972.21 386.90 L972.11 387.90 L972.01 388.90 L971.91 389.90 L971.81 390.90 L971.71 391.90 L971.62 392.90 L971.53 393.90 L971.44 394.90 L971.36 395.90 L971.28 396.90 L971.21 397.90 L971.15 398.90 L971.08 399.90 L971.02 400.90 L970.97 401.90 L970.91 402.90 L970.86 403.90 L970.81 404.90 L970.75 405.90 L970.70 406.90 L970.65 407.90 L970.60 408.90 L970.55 409.90 L970.50 410.90 L970.46 411.90 L970.41 412.90 L970.36 413.90 L970.31 414.90 L970.26 415.90 L970.21 416.90 L970.16 417.90 L970.12 418.90 L970.07 419.90 L970.02 420.90 L969.98 421.90 L969.93 422.90 L969.88 423.90 L969.83 424.90 L969.78 425.90 L969.73 426.90 L969.68 427.90 L969.63 428.90 L969.57 429.90 L969.52 430.90 L969.46 431.90 L969.40 432.90 L969.35 433.90 L969.29 434.90 L969.22 435.90 L969.16 436.90 L969.10 437.90 L969.04 438.90 L968.97 439.90 L968.91 440.90 L968.84 441.90 L968.78 442.90 L968.71 443.90 L968.64 444.90 L968.58 445.90 L968.51 446.90 L968.44 447.90 L968.37 448.90 L968.30 449.90 L968.22 450.90 L968.14 451.90 L968.06 452.90 L967.97 453.90 L967.88 454.90 L967.79 455.90 L967.70 456.90 L967.61 457.90 L967.52 458.90 L967.43 459.90 L967.35 460.90 L967.27 461.90 L967.21 462.90 L967.15 463.90 L967.10 464.90 L967.06 465.90 L967.04 466.90 L967.02 467.90 L967.01 468.90 L967.01 469.90 L967.01 470.90 L967.01 471.90 L967.01 472.90 L967.02 473.90 L967.02 474.90 L967.03 475.90 L967.03 476.90 L967.04 477.90 L967.05 478.90 L967.05 479.90 L967.06 480.90 L967.06 481.90 L967.07 482.90 L967.08 483.90 L967.08 484.90 L967.09 485.90 L967.09 486.90 L967.09 487.90 L967.10 488.90 L967.10 489.90 L967.10 490.90 L967.10 491.90 L967.10 492.90 L967.10 493.90 L967.10 494.90 L967.10 495.90 L967.09 496.90 L967.09 497.90 L967.09 498.90 L967.09 499.90 L967.09 500.90 L967.09 501.90 L967.08 502.90 L967.08 503.90 L967.08 504.90 L967.08 505.90 L967.07 506.90 L967.07 507.90 L967.07 508.90 L967.07 509.90 L967.06 510.90 L967.06 511.90 L967.06 512.90 L967.06 513.90 L967.06 514.90 L967.06 515.90 L967.05 516.90 L967.05 517.90 L967.05 518.90 L967.05 519.90 L967.05 520.90 L967.06 521.90 L967.06 522.90 L967.07 523.90 L967.08 524.90 L967.10 525.90 L967.11 526.90 L967.14 527.90 L967.16 528.90 L967.19 529.90 L967.22 530.90 L967.26 531.90 L967.29 532.90 L967.33 533.90 L967.37 534.90 L967.41 535.90 L967.46 536.90 L967.50 537.90 L967.54 538.90 L967.59 539.90 L967.63 540.90 L967.67 541.90 L967.71 542.90 L967.76 543.90 L967.80 544.90 L967.85 545.90 L967.90 546.90 L967.95 547.90 L968.01 548.90 L968.06 549.90 L968.12 550.90 L968.18 551.90 L968.24 552.90 L968.29 553.90 L968.34 554.90 L968.39 555.90 L968.42 556.90 L968.45 557.90 L968.47 558.90 L968.48 559.90 L968.49 560.90 L968.50 561.90 L968.50 562.90 L968.50 563.90 L968.50 564.90 L968.50 565.90 L968.50 566.20 L965.50 566.20 L965.50 565.90 L965.50 564.90 L965.50 563.90 L965.50 562.90 L965.50 561.90 L965.51 560.90 L965.52 559.90 L965.53 558.90 L965.55 557.90 L965.58 556.90 L965.61 555.90 L965.66 554.90 L965.71 553.90 L965.76 552.90 L965.82 551.90 L965.88 550.90 L965.94 549.90 L965.99 548.90 L966.05 547.90 L966.10 546.90 L966.15 545.90 L966.20 544.90 L966.24 543.90 L966.29 542.90 L966.33 541.90 L966.37 540.90 L966.41 539.90 L966.46 538.90 L966.50 537.90 L966.54 536.90 L966.59 535.90 L966.63 534.90 L966.67 533.90 L966.71 532.90 L966.74 531.90 L966.78 530.90 L966.81 529.90 L966.84 528.90 L966.86 527.90 L966.89 526.90 L966.90 525.90 L966.92 524.90 L966.93 523.90 L966.94 522.90 L966.94 521.90 L966.95 520.90 L966.95 519.90 L966.95 518.90 L966.95 517.90 L966.95 516.90 L966.94 515.90 L966.94 514.90 L966.94 513.90 L966.94 512.90 L966.94 511.90 L966.94 510.90 L966.93 509.90 L966.93 508.90 L966.93 507.90 L966.93 506.90 L966.92 505.90 L966.92 504.90 L966.92 503.90 L966.92 502.90 L966.91 501.90 L966.91 500.90 L966.91 499.90 L966.91 498.90 L966.91 497.90 L966.91 496.90 L966.90 495.90 L966.90 494.90 L966.90 493.90 L966.90 492.90 L966.90 491.90 L966.90 490.90 L966.90 489.90 L966.90 488.90 L966.91 487.90 L966.91 486.90 L966.91 485.90 L966.92 484.90 L966.92 483.90 L966.93 482.90 L966.94 481.90 L966.94 480.90 L966.95 479.90 L966.95 478.90 L966.96 477.90 L966.97 476.90 L966.97 475.90 L966.98 474.90 L966.98 473.90 L966.99 472.90 L966.99 471.90 L966.99 470.90 L966.99 469.90 L966.99 468.90 L966.98 467.90 L966.96 466.90 L966.94 465.90 L966.90 464.90 L966.85 463.90 L966.79 462.90 L966.73 461.90 L966.65 460.90 L966.57 459.90 L966.48 458.90 L966.39 457.90 L966.30 456.90 L966.21 455.90 L966.12 454.90 L966.03 453.90 L965.94 452.90 L965.86 451.90 L965.78 450.90 L965.70 449.90 L965.63 448.90 L965.56 447.90 L965.49 446.90 L965.42 445.90 L965.36 444.90 L965.29 443.90 L965.22 442.90 L965.16 441.90 L965.09 440.90 L965.03 439.90 L964.96 438.90 L964.90 437.90 L964.84 436.90 L964.78 435.90 L964.71 434.90 L964.65 433.90 L964.60 432.90 L964.54 431.90 L964.48 430.90 L964.43 429.90 L964.37 428.90 L964.32 427.90 L964.27 426.90 L964.22 425.90 L964.17 424.90 L964.12 423.90 L964.07 422.90 L964.02 421.90 L963.98 420.90 L963.93 419.90 L963.88 418.90 L963.84 417.90 L963.79 416.90 L963.74 415.90 L963.69 414.90 L963.64 413.90 L963.59 412.90 L963.54 411.90 L963.50 410.90 L963.45 409.90 L963.40 408.90 L963.35 407.90 L963.30 406.90 L963.25 405.90 L963.19 404.90 L963.14 403.90 L963.09 402.90 L963.03 401.90 L962.98 400.90 L962.92 399.90 L962.85 398.90 L962.79 397.90 L962.72 396.90 L962.64 395.90 L962.56 394.90 L962.47 393.90 L962.38 392.90 L962.29 391.90 L962.19 390.90 L962.09 389.90 L961.99 388.90 L961.89 387.90 L961.79 386.90 L961.69 385.90 L961.60 384.90 L961.52 383.90 L961.43 382.90 L961.35 381.90 L961.28 380.90 L961.20 379.90 L961.13 378.90 L961.05 377.90 L960.98 376.90 L960.91 375.90 L960.83 374.90 L960.75 373.90 L960.67 372.90 L960.58 371.90 L960.49 370.90 L960.38 369.90 L960.28 368.90 L960.16 367.90 L960.03 366.90 L959.88 365.90 L959.72 364.90 L959.54 363.90 L959.35 362.90 L959.15 361.90 L958.93 360.90 L958.70 359.90 L958.46 358.90 L958.21 357.90 L957.95 356.90 L957.67 355.90 L957.38 354.90 L957.08 353.90 L956.76 352.90 L956.42 351.90 L956.07 350.90 L955.71 349.90 L955.33 348.90 L954.94 347.90 L954.54 346.90 L954.12 345.90 L953.69 344.90 L953.25 343.90 L952.79 342.90 L952.31 341.90 L951.82 340.90 L951.32 339.90 L950.80 338.90 L950.28 337.90 L949.74 336.90 L949.20 335.90 L948.65 334.90 L948.09 333.90 L947.51 332.90 L946.92 331.90 L946.33 330.90 L945.73 329.90 L945.12 328.90 L944.52 327.90 L943.91 326.90 L943.32 325.90 L942.72 324.90 L942.12 323.90 L941.53 322.90 L940.93 321.90 L940.34 320.90 L939.75 319.90 L939.18 318.90 L938.62 317.90 L938.09 316.90 L937.59 315.90 L937.12 314.90 L936.67 313.90 L936.25 312.90 L935.85 311.90 L935.47 310.90 L935.11 309.90 L934.77 308.90 L934.46 307.90 L934.18 306.90 L933.94 305.90 L933.73 304.90 L933.55 303.90 L933.40 302.90 L933.26 301.90 L933.14 300.90 L933.03 299.90 L932.93 298.90 L932.84 297.90 L932.76 296.90 L932.69 295.90 L932.63 294.90 L932.59 293.90 L932.55 292.90 L932.54 291.90 L932.53 290.90 L932.54 289.90 L932.56 288.90 L932.59 287.90 L932.62 286.90 L932.66 285.90 L932.69 284.90 L932.72 283.90 L932.75 282.90 L932.76 281.90 L932.77 280.90 L932.76 279.90 L932.74 278.90 L932.71 277.90 L932.66 276.90 L932.60 275.90 L932.54 274.90 L932.46 273.90 L932.38 272.90 L932.28 271.90 L932.19 270.90 L932.08 269.90 L931.97 268.90 L931.85 267.90 L931.71 266.90 L931.56 265.90 L931.38 264.90 L931.19 263.90 L930.99 262.90 L930.78 261.90 L930.57 260.90 L930.35 259.90 L930.14 258.90 L929.94 257.90 L929.74 256.90 L929.54 255.90 L929.35 254.90 L929.16 253.90 L928.97 252.90 L928.78 251.90 L928.59 250.90 L928.41 249.90 L928.23 248.90 L928.05 247.90 L927.88 246.90 L927.71 245.90 L927.55 244.90 L927.40 243.90 L927.25 242.90 L927.10 241.90 L926.95 240.90 L926.80 239.90 L926.66 238.90 L926.53 237.90 L926.42 236.90 L926.32 235.90 L926.24 234.90 L926.20 233.90 L926.19 232.90 L926.20 231.90 L926.25 230.90 L926.32 229.90 L926.41 228.90 L926.53 227.90 L926.65 226.90 L926.79 225.90 L926.94 224.90 L927.11 223.90 L927.29 222.90 L927.49 221.90 L927.70 220.90 L927.92 219.90 L928.14 218.90 L928.36 217.90 L928.57 216.90 L928.77 215.90 L928.97 214.90 L929.16 213.90 L929.36 212.90 L929.57 211.90 L929.81 210.90 L930.07 209.90 L930.36 208.90 L930.68 207.90 L931.03 206.90 L931.41 205.90 L931.80 204.90 L932.21 203.90 L932.64 202.90 L933.08 201.90 L933.53 200.90 L933.99 199.90 L934.48 198.90 L934.97 197.90 L935.48 196.90 L936.00 195.90 L936.52 194.90 L937.06 193.90 L937.60 192.90 L938.16 191.90 L938.72 190.90 L939.29 189.90 L939.86 188.90 L940.42 187.90 L940.98 186.90 L941.53 185.90 L942.07 184.90 L942.60 183.90 L943.12 182.90 L943.63 181.90 L944.13 180.90 L944.63 179.90 L945.12 178.90 L945.62 177.90 L946.11 176.90 L946.61 175.90 L947.12 174.90 L947.62 173.90 L948.13 172.90 L948.64 171.90 L949.16 170.90 L949.66 169.90 L950.16 168.90 L950.66 167.90 L951.15 166.90 L951.63 165.90 L952.10 164.90 L952.56 163.90 L953.02 162.90 L953.47 161.90 L953.91 160.90 L954.34 159.90 L954.76 158.90 L955.18 157.90 L955.58 156.90 L955.97 155.90 L956.35 154.90 L956.73 153.90 L957.09 152.90 L957.45 151.90 L957.80 150.90 L958.14 149.90 L958.48 148.90 L958.81 147.90 L959.14 146.90 L959.45 145.90 L959.76 144.90 L960.07 143.90 L960.36 142.90 L960.63 141.90 L960.88 140.90 L961.10 139.90 L961.50 138.90 Z" fill="#52b995" stroke="#1c1c1c" stroke-width="1.0" stroke-linejoin="round"/>
<path d="M928.82 215.8 H1005.18" stroke="#333" stroke-width="1.3"/>
<path d="M929.82 257.4 H1004.18" stroke="#333" stroke-width="1.3"/>
<path d="M933.47 303.8 H1000.53" stroke="#333" stroke-width="1.3"/>
<path d="M1076.30 114.20 L1076.51 115.20 L1076.61 116.20 L1076.74 117.20 L1076.89 118.20 L1077.04 119.20 L1077.19 120.20 L1077.35 121.20 L1077.52 122.20 L1077.69 123.20 L1077.86 124.20 L1078.04 125.20 L1078.21 126.20 L1078.40 127.20 L1078.59 128.20 L1078.78 129.20 L1078.98 130.20 L1079.18 131.20 L1079.40 132.20 L1079.62 133.20 L1079.85 134.20 L1080.10 135.20 L1080.35 136.20 L1080.61 137.20 L1080.89 138.20 L1081.17 139.20 L1081.47 140.20 L1081.78 141.20 L1082.10 142.20 L1082.43 143.20 L1082.78 144.20 L1083.14 145.20 L1083.52 146.20 L1083.91 147.20 L1084.32 148.20 L1084.75 149.20 L1085.20 150.20 L1085.65 151.20 L1086.13 152.20 L1086.61 153.20 L1087.11 154.20 L1087.62 155.20 L1088.15 156.20 L1088.69 157.20 L1089.25 158.20 L1089.83 159.20 L1090.42 160.20 L1091.02 161.20 L1091.63 162.20 L1092.24 163.20 L1092.85 164.20 L1093.46 165.20 L1094.08 166.20 L1094.69 167.20 L1095.30 168.20 L1095.92 169.20 L1096.54 170.20 L1097.15 171.20 L1097.76 172.20 L1098.37 173.20 L1098.96 174.20 L1099.55 175.20 L1100.12 176.20 L1100.67 177.20 L1101.21 178.20 L1101.74 179.20 L1102.26 180.20 L1102.77 181.20 L1103.27 182.20 L1103.76 183.20 L1104.25 184.20 L1104.74 185.20 L1105.23 186.20 L1105.72 187.20 L1106.21 188.20 L1106.71 189.20 L1107.21 190.20 L1107.71 191.20 L1108.21 192.20 L1108.70 193.20 L1109.18 194.20 L1109.64 195.20 L1110.08 196.20 L1110.50 197.20 L1110.90 198.20 L1111.27 199.20 L1111.61 200.20 L1111.94 201.20 L1112.26 202.20 L1112.57 203.20 L1112.87 204.20 L1113.17 205.20 L1113.47 206.20 L1113.77 207.20 L1114.07 208.20 L1114.37 209.20 L1114.66 210.20 L1114.94 211.20 L1115.19 212.20 L1115.41 213.20 L1115.60 214.20 L1115.78 215.20 L1115.93 216.20 L1116.07 217.20 L1116.19 218.20 L1116.30 219.20 L1116.40 220.20 L1116.49 221.20 L1116.56 222.20 L1116.61 223.20 L1116.64 224.20 L1116.65 225.20 L1116.65 226.20 L1116.63 227.20 L1116.59 228.20 L1116.54 229.20 L1116.48 230.20 L1116.40 231.20 L1116.32 232.20 L1116.22 233.20 L1116.11 234.20 L1115.98 235.20 L1115.83 236.20 L1115.64 237.20 L1115.42 238.20 L1115.17 239.20 L1114.89 240.20 L1114.60 241.20 L1114.29 242.20 L1113.98 243.20 L1113.67 244.20 L1113.37 245.20 L1113.07 246.20 L1112.78 247.20 L1112.48 248.20 L1112.18 249.20 L1111.88 250.20 L1111.58 251.20 L1111.26 252.20 L1110.94 253.20 L1110.61 254.20 L1110.28 255.20 L1109.92 256.20 L1109.56 257.20 L1109.18 258.20 L1108.79 259.20 L1108.39 260.20 L1107.99 261.20 L1107.58 262.20 L1107.18 263.20 L1106.78 264.20 L1106.39 265.20 L1106.00 266.20 L1105.62 267.20 L1105.26 268.20 L1104.90 269.20 L1104.54 270.20 L1104.19 271.20 L1103.84 272.20 L1103.50 273.20 L1103.15 274.20 L1102.80 275.20 L1102.45 276.20 L1102.10 277.20 L1101.74 278.20 L1101.37 279.20 L1100.99 280.20 L1100.61 281.20 L1100.22 282.20 L1099.83 283.20 L1099.45 284.20 L1099.08 285.20 L1098.72 286.20 L1098.39 287.20 L1098.08 288.20 L1097.78 289.20 L1097.49 290.20 L1097.22 291.20 L1096.96 292.20 L1096.71 293.20 L1096.47 294.20 L1096.24 295.20 L1096.02 296.20 L1095.80 297.20 L1095.60 298.20 L1095.40 299.20 L1095.22 300.20 L1095.04 301.20 L1094.86 302.20 L1094.69 303.20 L1094.52 304.20 L1094.35 305.20 L1094.18 306.20 L1094.01 307.20 L1093.84 308.20 L1093.66 309.20 L1093.48 310.20 L1093.29 311.20 L1093.11 312.20 L1092.92 313.20 L1092.74 314.20 L1092.55 315.20 L1092.36 316.20 L1092.16 317.20 L1091.96 318.20 L1091.76 319.20 L1091.55 320.20 L1091.34 321.20 L1091.11 322.20 L1090.89 323.20 L1090.65 324.20 L1090.40 325.20 L1090.15 326.20 L1089.88 327.20 L1089.61 328.20 L1089.34 329.20 L1089.06 330.20 L1088.78 331.20 L1088.51 332.20 L1088.23 333.20 L1087.95 334.20 L1087.68 335.20 L1087.41 336.20 L1087.14 337.20 L1086.87 338.20 L1086.60 339.20 L1086.33 340.20 L1086.06 341.20 L1085.79 342.20 L1085.53 343.20 L1085.28 344.20 L1085.03 345.20 L1084.79 346.20 L1084.56 347.20 L1084.35 348.20 L1084.15 349.20 L1083.96 350.20 L1083.78 351.20 L1083.61 352.20 L1083.45 353.20 L1083.29 354.20 L1083.15 355.20 L1083.00 356.20 L1082.87 357.20 L1082.73 358.20 L1082.61 359.20 L1082.48 360.20 L1082.37 361.20 L1082.25 362.20 L1082.14 363.20 L1082.03 364.20 L1081.92 365.20 L1081.82 366.20 L1081.72 367.20 L1081.62 368.20 L1081.52 369.20 L1081.43 370.20 L1081.35 371.20 L1081.26 372.20 L1081.18 373.20 L1081.10 374.20 L1081.03 375.20 L1080.96 376.20 L1080.89 377.20 L1080.82 378.20 L1080.76 379.20 L1080.70 380.20 L1080.64 381.20 L1080.58 382.20 L1080.52 383.20 L1080.46 384.20 L1080.40 385.20 L1080.34 386.20 L1080.27 387.20 L1080.20 388.20 L1080.13 389.20 L1080.05 390.20 L1079.98 391.20 L1079.90 392.20 L1079.81 393.20 L1079.73 394.20 L1079.65 395.20 L1079.56 396.20 L1079.47 397.20 L1079.38 398.20 L1079.29 399.20 L1079.20 400.20 L1079.11 401.20 L1079.01 402.20 L1078.92 403.20 L1078.82 404.20 L1078.72 405.20 L1078.62 406.20 L1078.51 407.20 L1078.41 408.20 L1078.30 409.20 L1078.19 410.20 L1078.08 411.20 L1077.97 412.20 L1077.86 413.20 L1077.76 414.20 L1077.65 415.20 L1077.54 416.20 L1077.43 417.20 L1077.33 418.20 L1077.22 419.20 L1077.12 420.20 L1077.02 421.20 L1076.92 422.20 L1076.82 423.20 L1076.72 424.20 L1076.62 425.20 L1076.53 426.20 L1076.43 427.20 L1076.33 428.20 L1076.23 429.20 L1076.13 430.20 L1076.04 431.20 L1075.93 432.20 L1075.83 433.20 L1075.73 434.20 L1075.62 435.20 L1075.50 436.20 L1075.39 437.20 L1075.27 438.20 L1075.15 439.20 L1075.03 440.20 L1074.91 441.20 L1074.79 442.20 L1074.68 443.20 L1074.57 444.20 L1074.47 445.20 L1074.38 446.20 L1074.30 447.20 L1074.24 448.20 L1074.18 449.20 L1074.13 450.20 L1074.09 451.20 L1074.06 452.20 L1074.03 453.20 L1074.01 454.20 L1073.99 455.20 L1073.96 456.20 L1073.94 457.20 L1073.92 458.20 L1073.90 459.20 L1073.89 460.20 L1073.87 461.20 L1073.86 462.20 L1073.85 463.20 L1073.83 464.20 L1073.83 465.20 L1073.82 466.20 L1073.81 467.20 L1073.81 468.20 L1073.80 469.20 L1073.80 470.20 L1073.80 471.20 L1073.80 472.20 L1073.80 473.20 L1073.80 474.20 L1073.81 475.20 L1073.81 476.20 L1073.81 477.20 L1073.81 478.20 L1073.82 479.20 L1073.82 480.20 L1073.82 481.20 L1073.82 482.20 L1073.83 483.20 L1073.83 484.20 L1073.84 485.20 L1073.84 486.20 L1073.85 487.20 L1073.85 488.20 L1073.85 489.20 L1073.86 490.20 L1073.86 491.20 L1073.87 492.20 L1073.87 493.20 L1073.88 494.20 L1073.89 495.20 L1073.89 496.20 L1073.90 497.20 L1073.90 498.20 L1073.91 499.20 L1073.91 500.20 L1073.92 501.20 L1073.92 502.20 L1073.93 503.20 L1073.93 504.20 L1073.94 505.20 L1073.94 506.20 L1073.95 507.20 L1073.95 508.20 L1073.96 509.20 L1073.96 510.20 L1073.97 511.20 L1073.97 512.20 L1073.97 513.20 L1073.98 514.20 L1073.98 515.20 L1073.98 516.20 L1073.99 517.20 L1073.99 518.20 L1073.99 519.20 L1073.99 520.20 L1074.00 521.20 L1074.00 522.20 L1074.00 523.20 L1074.00 524.20 L1074.00 525.20 L1074.00 526.20 L1074.00 527.20 L1074.00 528.20 L1073.99 529.20 L1073.99 530.20 L1073.99 531.20 L1073.98 532.20 L1073.98 533.20 L1073.97 534.20 L1073.97 535.20 L1073.96 536.20 L1073.96 537.20 L1073.95 538.20 L1073.94 539.20 L1073.93 540.20 L1073.93 541.20 L1073.92 542.20 L1073.91 543.20 L1073.90 544.20 L1073.89 545.20 L1073.89 546.20 L1073.88 547.20 L1073.87 548.20 L1073.86 549.20 L1073.86 550.20 L1073.85 551.20 L1073.84 552.20 L1073.84 553.20 L1073.83 554.20 L1073.82 555.20 L1073.82 556.20 L1073.81 557.20 L1073.81 558.20 L1073.81 559.20 L1073.81 560.20 L1073.80 561.20 L1073.80 562.20 L1073.80 563.20 L1073.80 564.20 L1073.80 565.20 L1073.80 566.20 L1073.80 567.20 L1073.81 568.20 L1073.81 569.20 L1073.81 570.20 L1073.81 571.20 L1073.81 572.20 L1073.82 573.20 L1073.82 574.20 L1073.82 575.20 L1073.83 576.20 L1073.83 577.20 L1073.83 578.20 L1073.84 579.20 L1073.84 580.20 L1073.85 581.20 L1073.85 582.20 L1073.86 583.20 L1073.86 584.20 L1073.87 585.20 L1073.87 586.20 L1073.88 587.20 L1073.88 588.20 L1073.89 589.20 L1073.89 590.20 L1073.90 591.20 L1073.90 592.20 L1073.91 593.20 L1073.91 594.20 L1073.92 595.20 L1073.92 596.20 L1073.93 597.20 L1073.93 598.20 L1073.94 599.20 L1073.94 600.20 L1073.95 601.20 L1073.95 602.20 L1073.95 603.20 L1073.96 604.20 L1073.96 605.20 L1073.97 606.20 L1073.97 607.20 L1073.97 608.20 L1073.98 609.20 L1073.98 610.20 L1073.98 611.20 L1073.99 612.20 L1073.99 613.20 L1073.99 614.20 L1073.99 615.20 L1074.00 616.20 L1074.00 617.20 L1074.00 618.20 L1074.00 619.20 L1074.00 620.20 L1074.00 621.20 L1074.00 622.20 L1074.00 623.20 L1073.99 624.20 L1073.99 625.20 L1073.99 626.20 L1073.98 627.20 L1073.98 628.20 L1073.97 629.20 L1073.96 630.20 L1073.96 631.20 L1073.95 632.20 L1073.94 633.20 L1073.93 634.20 L1073.92 635.20 L1073.92 636.20 L1073.91 637.20 L1073.90 638.20 L1073.89 639.20 L1073.88 640.20 L1073.87 641.20 L1073.86 642.20 L1073.86 643.20 L1073.85 644.20 L1073.84 645.20 L1073.83 646.20 L1073.83 647.20 L1073.82 648.20 L1073.82 649.20 L1073.81 650.20 L1073.81 651.20 L1073.81 652.20 L1073.80 653.20 L1073.80 654.20 L1073.80 655.20 L1073.80 656.20 L1073.80 657.20 L1073.80 658.20 L1073.80 659.20 L1073.80 660.20 L1073.80 661.20 L1073.80 662.20 L1073.80 663.20 L1073.80 664.20 L1073.80 665.20 L1073.80 666.20 L1073.80 667.20 L1073.80 668.20 L1073.80 669.20 L1073.81 670.20 L1073.81 671.20 L1073.81 672.20 L1073.81 673.20 L1073.81 674.20 L1073.81 675.20 L1073.81 676.20 L1073.81 677.20 L1073.81 678.20 L1073.81 679.20 L1073.81 680.20 L1073.82 681.20 L1073.82 682.20 L1073.82 683.20 L1073.82 684.20 L1073.82 685.20 L1073.82 686.20 L1073.82 687.20 L1073.83 688.20 L1073.83 689.20 L1073.83 690.20 L1073.83 691.20 L1073.83 692.20 L1073.84 693.20 L1073.84 694.20 L1073.84 695.20 L1073.84 696.20 L1073.84 697.20 L1073.85 698.20 L1073.85 699.20 L1073.85 700.20 L1073.86 701.20 L1073.87 702.20 L1073.88 703.20 L1073.89 704.20 L1073.90 705.20 L1073.91 706.20 L1073.93 707.20 L1073.95 708.20 L1073.97 709.20 L1073.99 710.20 L1074.01 711.20 L1074.04 712.20 L1074.06 713.20 L1074.09 714.20 L1074.11 715.20 L1074.14 716.20 L1074.17 717.20 L1074.20 718.20 L1074.23 719.20 L1074.26 720.20 L1074.29 721.20 L1074.32 722.20 L1074.36 723.20 L1074.40 724.20 L1074.45 725.20 L1074.50 726.20 L1074.56 727.20 L1074.61 728.20 L1074.67 729.20 L1074.74 730.20 L1074.80 731.20 L1074.86 732.20 L1074.92 733.20 L1074.98 734.20 L1075.04 735.20 L1075.09 736.20 L1075.14 737.20 L1075.18 738.20 L1075.21 739.20 L1075.24 740.20 L1075.26 741.20 L1075.28 742.20 L1075.29 743.20 L1075.30 744.20 L1075.30 745.20 L1075.30 746.20 L1075.30 747.20 L1075.30 748.20 L1075.30 749.20 L1075.29 750.20 L1075.29 751.20 L1075.29 752.20 L1075.29 753.20 L1075.28 754.20 L1075.28 755.20 L1075.27 756.20 L1075.26 757.20 L1075.26 758.20 L1075.25 759.20 L1075.24 760.20 L1075.22 761.20 L1075.21 762.20 L1075.20 763.20 L1075.18 764.20 L1075.17 765.20 L1075.15 766.20 L1075.14 767.20 L1075.12 768.20 L1075.10 768.60 L1072.50 768.60 L1072.48 768.20 L1072.46 767.20 L1072.45 766.20 L1072.43 765.20 L1072.42 764.20 L1072.40 763.20 L1072.39 762.20 L1072.38 761.20 L1072.36 760.20 L1072.35 759.20 L1072.34 758.20 L1072.34 757.20 L1072.33 756.20 L1072.32 755.20 L1072.32 754.20 L1072.31 753.20 L1072.31 752.20 L1072.31 751.20 L1072.31 750.20 L1072.30 749.20 L1072.30 748.20 L1072.30 747.20 L1072.30 746.20 L1072.30 745.20 L1072.30 744.20 L1072.31 743.20 L1072.32 742.20 L1072.34 741.20 L1072.36 740.20 L1072.39 739.20 L1072.42 738.20 L1072.46 737.20 L1072.51 736.20 L1072.56 735.20 L1072.62 734.20 L1072.68 733.20 L1072.74 732.20 L1072.80 731.20 L1072.86 730.20 L1072.93 729.20 L1072.99 728.20 L1073.04 727.20 L1073.10 726.20 L1073.15 725.20 L1073.20 724.20 L1073.24 723.20 L1073.28 722.20 L1073.31 721.20 L1073.34 720.20 L1073.37 719.20 L1073.40 718.20 L1073.43 717.20 L1073.46 716.20 L1073.49 715.20 L1073.51 714.20 L1073.54 713.20 L1073.56 712.20 L1073.59 711.20 L1073.61 710.20 L1073.63 709.20 L1073.65 708.20 L1073.67 707.20 L1073.69 706.20 L1073.70 705.20 L1073.71 704.20 L1073.72 703.20 L1073.73 702.20 L1073.74 701.20 L1073.75 700.20 L1073.75 699.20 L1073.75 698.20 L1073.76 697.20 L1073.76 696.20 L1073.76 695.20 L1073.76 694.20 L1073.76 693.20 L1073.77 692.20 L1073.77 691.20 L1073.77 690.20 L1073.77 689.20 L1073.77 688.20 L1073.78 687.20 L1073.78 686.20 L1073.78 685.20 L1073.78 684.20 L1073.78 683.20 L1073.78 682.20 L1073.78 681.20 L1073.79 680.20 L1073.79 679.20 L1073.79 678.20 L1073.79 677.20 L1073.79 676.20 L1073.79 675.20 L1073.79 674.20 L1073.79 673.20 L1073.79 672.20 L1073.79 671.20 L1073.79 670.20 L1073.80 669.20 L1073.80 668.20 L1073.80 667.20 L1073.80 666.20 L1073.80 665.20 L1073.80 664.20 L1073.80 663.20 L1073.80 662.20 L1073.80 661.20 L1073.80 660.20 L1073.80 659.20 L1073.80 658.20 L1073.80 657.20 L1073.80 656.20 L1073.80 655.20 L1073.80 654.20 L1073.80 653.20 L1073.79 652.20 L1073.79 651.20 L1073.79 650.20 L1073.78 649.20 L1073.78 648.20 L1073.77 647.20 L1073.77 646.20 L1073.76 645.20 L1073.75 644.20 L1073.74 643.20 L1073.74 642.20 L1073.73 641.20 L1073.72 640.20 L1073.71 639.20 L1073.70 638.20 L1073.69 637.20 L1073.68 636.20 L1073.68 635.20 L1073.67 634.20 L1073.66 633.20 L1073.65 632.20 L1073.64 631.20 L1073.64 630.20 L1073.63 629.20 L1073.62 628.20 L1073.62 627.20 L1073.61 626.20 L1073.61 625.20 L1073.61 624.20 L1073.60 623.20 L1073.60 622.20 L1073.60 621.20 L1073.60 620.20 L1073.60 619.20 L1073.60 618.20 L1073.60 617.20 L1073.60 616.20 L1073.61 615.20 L1073.61 614.20 L1073.61 613.20 L1073.61 612.20 L1073.62 611.20 L1073.62 610.20 L1073.62 609.20 L1073.63 608.20 L1073.63 607.20 L1073.63 606.20 L1073.64 605.20 L1073.64 604.20 L1073.65 603.20 L1073.65 602.20 L1073.65 601.20 L1073.66 600.20 L1073.66 599.20 L1073.67 598.20 L1073.67 597.20 L1073.68 596.20 L1073.68 595.20 L1073.69 594.20 L1073.69 593.20 L1073.70 592.20 L1073.70 591.20 L1073.71 590.20 L1073.71 589.20 L1073.72 588.20 L1073.72 587.20 L1073.73 586.20 L1073.73 585.20 L1073.74 584.20 L1073.74 583.20 L1073.75 582.20 L1073.75 581.20 L1073.76 580.20 L1073.76 579.20 L1073.77 578.20 L1073.77 577.20 L1073.77 576.20 L1073.78 575.20 L1073.78 574.20 L1073.78 573.20 L1073.79 572.20 L1073.79 571.20 L1073.79 570.20 L1073.79 569.20 L1073.79 568.20 L1073.80 567.20 L1073.80 566.20 L1073.80 565.20 L1073.80 564.20 L1073.80 563.20 L1073.80 562.20 L1073.80 561.20 L1073.79 560.20 L1073.79 559.20 L1073.79 558.20 L1073.79 557.20 L1073.78 556.20 L1073.78 555.20 L1073.77 554.20 L1073.76 553.20 L1073.76 552.20 L1073.75 551.20 L1073.74 550.20 L1073.74 549.20 L1073.73 548.20 L1073.72 547.20 L1073.71 546.20 L1073.71 545.20 L1073.70 544.20 L1073.69 543.20 L1073.68 542.20 L1073.67 541.20 L1073.67 540.20 L1073.66 539.20 L1073.65 538.20 L1073.64 537.20 L1073.64 536.20 L1073.63 535.20 L1073.63 534.20 L1073.62 533.20 L1073.62 532.20 L1073.61 531.20 L1073.61 530.20 L1073.61 529.20 L1073.60 528.20 L1073.60 527.20 L1073.60 526.20 L1073.60 525.20 L1073.60 524.20 L1073.60 523.20 L1073.60 522.20 L1073.60 521.20 L1073.61 520.20 L1073.61 519.20 L1073.61 518.20 L1073.61 517.20 L1073.62 516.20 L1073.62 515.20 L1073.62 514.20 L1073.63 513.20 L1073.63 512.20 L1073.63 511.20 L1073.64 510.20 L1073.64 509.20 L1073.65 508.20 L1073.65 507.20 L1073.66 506.20 L1073.66 505.20 L1073.67 504.20 L1073.67 503.20 L1073.68 502.20 L1073.68 501.20 L1073.69 500.20 L1073.69 499.20 L1073.70 498.20 L1073.70 497.20 L1073.71 496.20 L1073.71 495.20 L1073.72 494.20 L1073.73 493.20 L1073.73 492.20 L1073.74 491.20 L1073.74 490.20 L1073.75 489.20 L1073.75 488.20 L1073.75 487.20 L1073.76 486.20 L1073.76 485.20 L1073.77 484.20 L1073.77 483.20 L1073.78 482.20 L1073.78 481.20 L1073.78 480.20 L1073.78 479.20 L1073.79 478.20 L1073.79 477.20 L1073.79 476.20 L1073.79 475.20 L1073.80 474.20 L1073.80 473.20 L1073.80 472.20 L1073.80 471.20 L1073.80 470.20 L1073.80 469.20 L1073.79 468.20 L1073.79 467.20 L1073.78 466.20 L1073.77 465.20 L1073.77 464.20 L1073.75 463.20 L1073.74 462.20 L1073.73 461.20 L1073.71 460.20 L1073.70 459.20 L1073.68 458.20 L1073.66 457.20 L1073.64 456.20 L1073.61 455.20 L1073.59 454.20 L1073.57 453.20 L1073.54 452.20 L1073.51 451.20 L1073.47 450.20 L1073.42 449.20 L1073.36 448.20 L1073.30 447.20 L1073.22 446.20 L1073.13 445.20 L1073.03 444.20 L1072.92 443.20 L1072.81 442.20 L1072.69 441.20 L1072.57 440.20 L1072.45 439.20 L1072.33 438.20 L1072.21 437.20 L1072.10 436.20 L1071.98 435.20 L1071.87 434.20 L1071.77 433.20 L1071.67 432.20 L1071.56 431.20 L1071.47 430.20 L1071.37 429.20 L1071.27 428.20 L1071.17 427.20 L1071.07 426.20 L1070.98 425.20 L1070.88 424.20 L1070.78 423.20 L1070.68 422.20 L1070.58 421.20 L1070.48 420.20 L1070.38 419.20 L1070.27 418.20 L1070.17 417.20 L1070.06 416.20 L1069.95 415.20 L1069.84 414.20 L1069.74 413.20 L1069.63 412.20 L1069.52 411.20 L1069.41 410.20 L1069.30 409.20 L1069.19 408.20 L1069.09 407.20 L1068.98 406.20 L1068.88 405.20 L1068.78 404.20 L1068.68 403.20 L1068.59 402.20 L1068.49 401.20 L1068.40 400.20 L1068.31 399.20 L1068.22 398.20 L1068.13 397.20 L1068.04 396.20 L1067.95 395.20 L1067.87 394.20 L1067.79 393.20 L1067.70 392.20 L1067.62 391.20 L1067.55 390.20 L1067.47 389.20 L1067.40 388.20 L1067.33 387.20 L1067.26 386.20 L1067.20 385.20 L1067.14 384.20 L1067.08 383.20 L1067.02 382.20 L1066.96 381.20 L1066.90 380.20 L1066.84 379.20 L1066.78 378.20 L1066.71 377.20 L1066.64 376.20 L1066.57 375.20 L1066.50 374.20 L1066.42 373.20 L1066.34 372.20 L1066.25 371.20 L1066.17 370.20 L1066.08 369.20 L1065.98 368.20 L1065.88 367.20 L1065.78 366.20 L1065.68 365.20 L1065.57 364.20 L1065.46 363.20 L1065.35 362.20 L1065.23 361.20 L1065.12 360.20 L1064.99 359.20 L1064.87 358.20 L1064.73 357.20 L1064.60 356.20 L1064.45 355.20 L1064.31 354.20 L1064.15 353.20 L1063.99 352.20 L1063.82 351.20 L1063.64 350.20 L1063.45 349.20 L1063.25 348.20 L1063.04 347.20 L1062.81 346.20 L1062.57 345.20 L1062.32 344.20 L1062.07 343.20 L1061.81 342.20 L1061.54 341.20 L1061.27 340.20 L1061.00 339.20 L1060.73 338.20 L1060.46 337.20 L1060.19 336.20 L1059.92 335.20 L1059.65 334.20 L1059.37 333.20 L1059.09 332.20 L1058.82 331.20 L1058.54 330.20 L1058.26 329.20 L1057.99 328.20 L1057.72 327.20 L1057.45 326.20 L1057.20 325.20 L1056.95 324.20 L1056.71 323.20 L1056.49 322.20 L1056.26 321.20 L1056.05 320.20 L1055.84 319.20 L1055.64 318.20 L1055.44 317.20 L1055.24 316.20 L1055.05 315.20 L1054.86 314.20 L1054.68 313.20 L1054.49 312.20 L1054.31 311.20 L1054.12 310.20 L1053.94 309.20 L1053.76 308.20 L1053.59 307.20 L1053.42 306.20 L1053.25 305.20 L1053.08 304.20 L1052.91 303.20 L1052.74 302.20 L1052.56 301.20 L1052.38 300.20 L1052.20 299.20 L1052.00 298.20 L1051.80 297.20 L1051.58 296.20 L1051.36 295.20 L1051.13 294.20 L1050.89 293.20 L1050.64 292.20 L1050.38 291.20 L1050.11 290.20 L1049.82 289.20 L1049.52 288.20 L1049.21 287.20 L1048.88 286.20 L1048.52 285.20 L1048.15 284.20 L1047.77 283.20 L1047.38 282.20 L1046.99 281.20 L1046.61 280.20 L1046.23 279.20 L1045.86 278.20 L1045.50 277.20 L1045.15 276.20 L1044.80 275.20 L1044.45 274.20 L1044.10 273.20 L1043.76 272.20 L1043.41 271.20 L1043.06 270.20 L1042.70 269.20 L1042.34 268.20 L1041.98 267.20 L1041.60 266.20 L1041.21 265.20 L1040.82 264.20 L1040.42 263.20 L1040.02 262.20 L1039.61 261.20 L1039.21 260.20 L1038.81 259.20 L1038.42 258.20 L1038.04 257.20 L1037.68 256.20 L1037.32 255.20 L1036.99 254.20 L1036.66 253.20 L1036.34 252.20 L1036.02 251.20 L1035.72 250.20 L1035.42 249.20 L1035.12 248.20 L1034.82 247.20 L1034.53 246.20 L1034.23 245.20 L1033.93 244.20 L1033.62 243.20 L1033.31 242.20 L1033.00 241.20 L1032.71 240.20 L1032.43 239.20 L1032.18 238.20 L1031.96 237.20 L1031.77 236.20 L1031.62 235.20 L1031.49 234.20 L1031.38 233.20 L1031.28 232.20 L1031.20 231.20 L1031.12 230.20 L1031.06 229.20 L1031.01 228.20 L1030.97 227.20 L1030.95 226.20 L1030.95 225.20 L1030.96 224.20 L1030.99 223.20 L1031.04 222.20 L1031.11 221.20 L1031.20 220.20 L1031.30 219.20 L1031.41 218.20 L1031.53 217.20 L1031.67 216.20 L1031.82 215.20 L1032.00 214.20 L1032.19 213.20 L1032.41 212.20 L1032.66 211.20 L1032.94 210.20 L1033.23 209.20 L1033.53 208.20 L1033.83 207.20 L1034.13 206.20 L1034.43 205.20 L1034.73 204.20 L1035.03 203.20 L1035.34 202.20 L1035.66 201.20 L1035.99 200.20 L1036.33 199.20 L1036.70 198.20 L1037.10 197.20 L1037.52 196.20 L1037.96 195.20 L1038.42 194.20 L1038.90 193.20 L1039.39 192.20 L1039.89 191.20 L1040.39 190.20 L1040.89 189.20 L1041.39 188.20 L1041.88 187.20 L1042.37 186.20 L1042.86 185.20 L1043.35 184.20 L1043.84 183.20 L1044.33 182.20 L1044.83 181.20 L1045.34 180.20 L1045.86 179.20 L1046.39 178.20 L1046.93 177.20 L1047.48 176.20 L1048.05 175.20 L1048.64 174.20 L1049.23 173.20 L1049.84 172.20 L1050.45 171.20 L1051.06 170.20 L1051.68 169.20 L1052.30 168.20 L1052.91 167.20 L1053.52 166.20 L1054.14 165.20 L1054.75 164.20 L1055.36 163.20 L1055.97 162.20 L1056.58 161.20 L1057.18 160.20 L1057.77 159.20 L1058.35 158.20 L1058.91 157.20 L1059.45 156.20 L1059.98 155.20 L1060.49 154.20 L1060.99 153.20 L1061.47 152.20 L1061.95 151.20 L1062.40 150.20 L1062.85 149.20 L1063.28 148.20 L1063.69 147.20 L1064.08 146.20 L1064.46 145.20 L1064.82 144.20 L1065.17 143.20 L1065.50 142.20 L1065.82 141.20 L1066.13 140.20 L1066.43 139.20 L1066.71 138.20 L1066.99 137.20 L1067.25 136.20 L1067.50 135.20 L1067.75 134.20 L1067.98 133.20 L1068.20 132.20 L1068.42 131.20 L1068.62 130.20 L1068.82 129.20 L1069.01 128.20 L1069.20 127.20 L1069.39 126.20 L1069.56 125.20 L1069.74 124.20 L1069.91 123.20 L1070.08 122.20 L1070.25 121.20 L1070.41 120.20 L1070.56 119.20 L1070.71 118.20 L1070.86 117.20 L1070.99 116.20 L1071.09 115.20 L1071.30 114.20 Z" fill="#00a0b3" stroke="#1c1c1c" stroke-width="1.0" stroke-linejoin="round"/>
<path d="M1034.45 205.2 H1113.15" stroke="#333" stroke-width="1.3"/>
<path d="M1034.04 244.5 H1113.56" stroke="#333" stroke-width="1.3"/>
<path d="M1051.80 297.1 H1095.80" stroke="#333" stroke-width="1.3"/>
<rect x="1157.8" y="418.5" width="17.5" height="18.6" fill="#8073ae" stroke="#222" stroke-width="1"/>
<rect x="1157.8" y="438.1" width="17.5" height="18.6" fill="#52b995" stroke="#222" stroke-width="1"/>
<rect x="1157.8" y="457.7" width="17.5" height="18.6" fill="#00a0b3" stroke="#222" stroke-width="1"/>
</svg>
<div class="t" style="left:796.60px;top:58.62px;font-size:15.1px;color:#111;font-weight:normal;">Profit ratio by category</div>
<div class="t" style="right:489.5px;top:104.9px;font-size:6.4px;color:#666">0.5</div>
<div class="t" style="right:489.5px;top:314.9px;font-size:6.4px;color:#666">0.0</div>
<div class="t" style="right:489.5px;top:524.9px;font-size:6.4px;color:#666">-0.5</div>
<div class="t" style="right:489.5px;top:734.9px;font-size:6.4px;color:#666">-1.0</div>
<div class="t" style="left:820.2px;width:80px;text-align:center;top:807.10px;font-size:6.5px;color:#555">Consumer</div>
<div class="t" style="left:927px;width:80px;text-align:center;top:807.10px;font-size:6.5px;color:#555">Corporate</div>
<div class="t" style="left:1033.8px;width:80px;text-align:center;top:807.10px;font-size:6.5px;color:#555">Home Office</div>
<div class="t" style="left:927px;width:80px;text-align:center;top:814.62px;font-size:12.5px;color:#111">Segment</div>
<div class="t" style="left:710.5px;top:435.9px;width:120px;height:12px;text-align:center;font-size:12.5px;color:#111;transform:rotate(-90deg);transform-origin:60px 6px">AGG(Profit Ratio)</div>
<div class="t" style="left:1167px;width:100px;text-align:center;top:423.04px;font-size:10px;color:#333">Consumer</div>
<div class="t" style="left:1167px;width:100px;text-align:center;top:442.94px;font-size:10px;color:#333">Corporate</div>
<div class="t" style="left:1167px;width:100px;text-align:center;top:462.84px;font-size:10px;color:#333">Home Office</div>
</body></html>
